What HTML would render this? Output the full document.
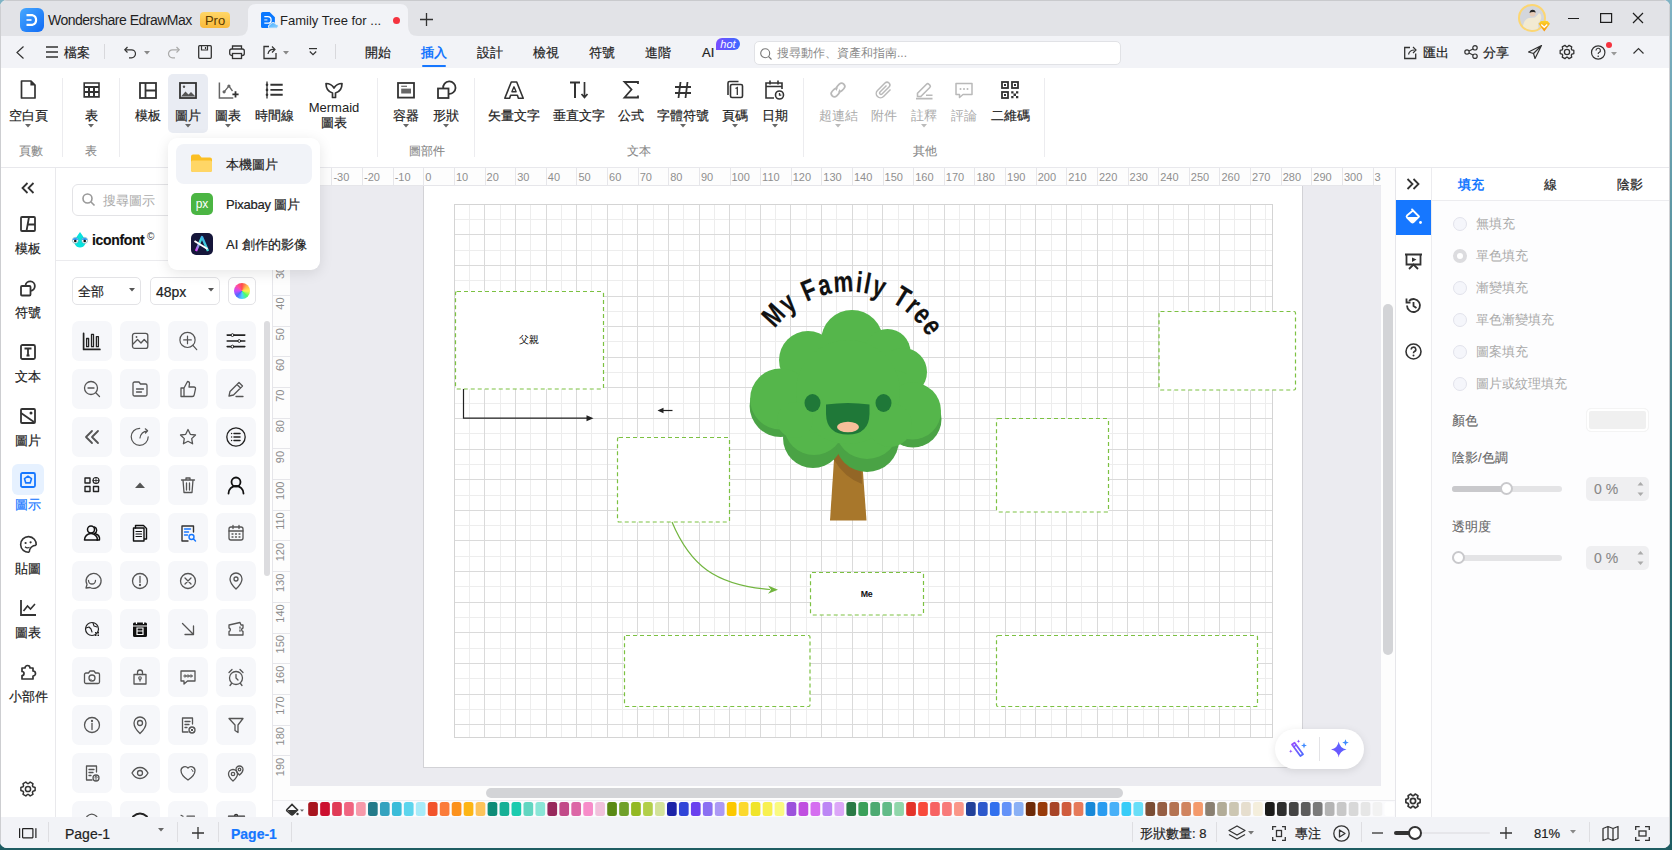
<!DOCTYPE html><html><head><meta charset="utf-8"><style>
html,body{margin:0;padding:0;} #win div.dk{-webkit-text-stroke-width:0.2px;} #win div.md{-webkit-text-stroke-width:0.1px;}
body{width:1672px;height:850px;overflow:hidden;position:relative;font-family:"Liberation Sans", sans-serif;background:linear-gradient(#7fb3c4,#2e7076 60%,#1f5d63);}
#win{position:absolute;left:0;top:0;width:1670px;height:848px;border-radius:7px;overflow:hidden;background:#fff;}
</style></head><body><div id="win">
<div style="position:absolute;left:0px;top:0px;width:1670px;height:36px;background:#e2e3e7;"></div>
<div style="position:absolute;left:0px;top:0px;width:1670px;height:1px;background:#c9cacd;"></div>
<svg style="position:absolute;left:20px;top:8px;overflow:visible;" width="24" height="24" viewBox="0 0 24 24" fill="none"><defs><linearGradient id="lg" x1="0" y1="0" x2="1" y2="1"><stop offset="0" stop-color="#46a8ff"/><stop offset="1" stop-color="#0f6af5"/></linearGradient></defs><rect width="24" height="24" rx="6" fill="url(#lg)"/><path d="M6.5 7.2h6a5 5 0 0 1 0 9.6h-6" stroke="#fff" stroke-width="2.2" fill="none"/><path d="M6.5 12h5" stroke="#cfe3ff" stroke-width="2"/></svg>
<div class="lt" style="position:absolute;left:48px;top:11px;font-size:14px;line-height:18px;color:#1f1f1f;white-space:nowrap;text-align:left;letter-spacing:-0.5px;">Wondershare EdrawMax</div>
<div style="position:absolute;left:200px;top:12px;width:30px;height:16px;background:linear-gradient(#ffd767,#f9b93a);border-radius:4px;"></div>
<div class="lt" style="position:absolute;left:200px;top:12px;width:30px;font-size:13px;line-height:17px;color:#5a3a00;white-space:nowrap;text-align:center;">Pro</div>
<svg style="position:absolute;left:238px;top:4px" width="180" height="32" viewBox="0 0 180 32"><path d="M0 32 Q10 32 10 22 V8 Q10 0 18 0 H162 Q170 0 170 8 V22 Q170 32 180 32 Z" fill="#f2f3f7"/></svg>
<svg style="position:absolute;left:260px;top:11px;overflow:visible;" width="19" height="19" viewBox="0 0 19 19" fill="none"><defs><linearGradient id="cl" x1="0" y1="0" x2="1" y2="1"><stop offset="0" stop-color="#4ab0ff"/><stop offset="1" stop-color="#8fd0ff"/></linearGradient></defs><path d="M1 2.5A1.6 1.6 0 0 1 2.6 1H9.6L14.9 6.2V15.4A1.6 1.6 0 0 1 13.3 17H2.6A1.6 1.6 0 0 1 1 15.4z" fill="#0a78ff"/><path d="M4.3 5.6H7.8A3.3 3.3 0 0 1 7.8 12.2H4.3" stroke="#fff" stroke-width="1.3"/><path d="M4.3 8.9H7.4" stroke="#bcd8ff" stroke-width="1.3"/><path d="M9.2 17.2A2 2 0 0 1 10.2 13.6A3 3 0 0 1 15.8 13.3A2 2 0 0 1 16.8 17.2z" fill="url(#cl)" stroke="#f2f3f7" stroke-width="1"/></svg>
<div class="lt" style="position:absolute;left:280px;top:12px;font-size:13px;line-height:17px;color:#1f1f1f;white-space:nowrap;text-align:left;">Family Tree for ...</div>
<div style="position:absolute;left:393px;top:17px;width:7px;height:7px;border-radius:50%;background:#f5333f"></div>
<svg style="position:absolute;left:420px;top:13px;overflow:visible;" width="13" height="13" viewBox="0 0 13 13" fill="none"><path d="M6.5 0v13M0 6.5h13" stroke="#333" stroke-width="1.3"/></svg>
<svg style="position:absolute;left:1518px;top:4px;overflow:visible;" width="32" height="30" viewBox="0 0 32 30" fill="none"><defs><clipPath id="av"><circle cx="14" cy="14" r="12"/></clipPath><linearGradient id="bdg" x1="0" y1="0" x2="0" y2="1"><stop offset="0" stop-color="#fcd22c"/><stop offset="1" stop-color="#f7940a"/></linearGradient></defs><circle cx="14" cy="14" r="13" fill="#d3d6dc" stroke="#fcd672" stroke-width="2"/><g clip-path="url(#av)"><path d="M4 30 Q4.5 15 11 14 L17 13.5 Q20 11 21 9 Q24 10 23 15 Q22 18 20 19 L21 30z" fill="#f2ead2"/><circle cx="14.5" cy="9.5" r="3" fill="#e8cdb8"/><path d="M11.5 9 Q12 5.5 15 5.8 Q17.5 6 17.8 8.5 Q16 7.5 13 8.2z" fill="#2a2a2a"/></g><path d="M20.5 19.8 L23 17 H29.5 L32 19.8 L26.25 27.4z" fill="url(#bdg)"/><path d="M23.3 20.6 L26.25 23.3 L29.2 20.6" stroke="#fff" stroke-width="1.3" fill="none"/></svg>
<div style="position:absolute;left:1568px;top:18px;width:11px;height:1px;background:#1e1e1e;"></div>
<svg style="position:absolute;left:1600px;top:13px;overflow:visible;" width="12" height="10" viewBox="0 0 12 10" fill="none"><rect x="0.6" y="0.6" width="11" height="8.8" stroke="#1e1e1e" stroke-width="1.2"/></svg>
<svg style="position:absolute;left:1633px;top:13px;overflow:visible;" width="10" height="10" viewBox="0 0 10 10" fill="none"><path d="M0 0l10 10M10 0L0 10" stroke="#1e1e1e" stroke-width="1.2"/></svg>
<div style="position:absolute;left:0px;top:36px;width:1670px;height:32px;background:#f2f3f7;"></div>
<svg style="position:absolute;left:16px;top:46px;overflow:visible;" width="8" height="13" viewBox="0 0 8 13" fill="none"><path d="M7.5 0.5L1 6.5l6.5 6" stroke="#333" stroke-width="1.2"/></svg>
<svg style="position:absolute;left:46px;top:46px;overflow:visible;" width="12" height="12" viewBox="0 0 12 12" fill="none"><path d="M0 1h12M0 6h12M0 11h12" stroke="#333" stroke-width="1.3"/></svg>
<div class="dk" style="position:absolute;left:64px;top:44px;font-size:13px;line-height:17px;color:#222;white-space:nowrap;text-align:left;">檔案</div>
<div style="position:absolute;left:104px;top:44px;width:1px;height:15px;background:#d8d8dc;"></div>
<svg style="position:absolute;left:124px;top:46px;overflow:visible;" width="13" height="12" viewBox="0 0 13 12" fill="none"><path d="M3.5 1L0.8 3.8 3.5 6.5" stroke="#333" stroke-width="1.2"/><path d="M1 3.8h6.5a4 4 0 0 1 0 8H5" stroke="#333" stroke-width="1.2"/></svg>
<svg style="position:absolute;left:144px;top:51px;overflow:visible;" width="6" height="4" viewBox="0 0 6 4" fill="none"><path d="M0 0h6L3 3.5z" fill="#888"/></svg>
<svg style="position:absolute;left:167px;top:46px;overflow:visible;" width="13" height="12" viewBox="0 0 13 12" fill="none"><path d="M9.5 1l2.7 2.8-2.7 2.7" stroke="#aaa" stroke-width="1.2"/><path d="M12 3.8H5.5a4 4 0 0 0 0 8H8" stroke="#aaa" stroke-width="1.2"/></svg>
<svg style="position:absolute;left:198px;top:45px;overflow:visible;" width="14" height="14" viewBox="0 0 14 14" fill="none"><rect x="0.7" y="0.7" width="12.6" height="12.6" rx="1" stroke="#333" stroke-width="1.3"/><path d="M3.5 1v4h6V1M7.5 2v2" stroke="#333" stroke-width="1.2"/></svg>
<svg style="position:absolute;left:229px;top:45px;overflow:visible;" width="16" height="14" viewBox="0 0 16 14" fill="none"><path d="M3.5 4V1h9v3" stroke="#333" stroke-width="1.3"/><rect x="0.7" y="4" width="14.6" height="6.5" rx="2" stroke="#333" stroke-width="1.3"/><rect x="3.5" y="8.5" width="9" height="5" fill="#f2f3f7" stroke="#333" stroke-width="1.3"/></svg>
<svg style="position:absolute;left:263px;top:45px;overflow:visible;" width="14" height="14" viewBox="0 0 14 14" fill="none"><path d="M6 1.5H1v12h12V8" stroke="#333" stroke-width="1.3"/><path d="M5 9 Q6 4 11 4.5" stroke="#333" stroke-width="1.2"/><path d="M9 1.5l3 3-3 3" stroke="#333" stroke-width="1.2"/></svg>
<svg style="position:absolute;left:283px;top:51px;overflow:visible;" width="6" height="4" viewBox="0 0 6 4" fill="none"><path d="M0 0h6L3 3.5z" fill="#888"/></svg>
<svg style="position:absolute;left:309px;top:48px;overflow:visible;" width="8" height="9" viewBox="0 0 8 9" fill="none"><path d="M0 0.6h8" stroke="#333" stroke-width="1.2"/><path d="M0.8 3.5l3.2 3.2 3.2-3.2" stroke="#333" stroke-width="1.2"/></svg>
<div style="position:absolute;left:335px;top:44px;width:1px;height:15px;background:#d8d8dc;"></div>
<div class="dk" style="position:absolute;left:278px;top:44px;width:200px;font-size:13px;line-height:17px;color:#222;white-space:nowrap;text-align:center;">開始</div>
<div class="dk" style="position:absolute;left:334px;top:44px;width:200px;font-size:13px;line-height:17px;color:#1677ff;white-space:nowrap;text-align:center;font-weight:600;-webkit-text-stroke-width:0;">插入</div>
<div class="dk" style="position:absolute;left:390px;top:44px;width:200px;font-size:13px;line-height:17px;color:#222;white-space:nowrap;text-align:center;">設計</div>
<div class="dk" style="position:absolute;left:446px;top:44px;width:200px;font-size:13px;line-height:17px;color:#222;white-space:nowrap;text-align:center;">檢視</div>
<div class="dk" style="position:absolute;left:502px;top:44px;width:200px;font-size:13px;line-height:17px;color:#222;white-space:nowrap;text-align:center;">符號</div>
<div class="dk" style="position:absolute;left:558px;top:44px;width:200px;font-size:13px;line-height:17px;color:#222;white-space:nowrap;text-align:center;">進階</div>
<div style="position:absolute;left:422px;top:65px;width:24px;height:2px;background:#1677ff;border-radius:1px;"></div>
<div class="dk" style="position:absolute;left:702px;top:44px;font-size:13px;line-height:17px;color:#222;white-space:nowrap;text-align:left;">AI</div>
<div style="position:absolute;left:716px;top:38px;width:24px;height:12px;background:linear-gradient(90deg,#7a4dff,#3a6bff);border-radius:6px 6px 6px 0;"></div>
<div class="lt" style="position:absolute;left:716px;top:38px;width:24px;font-size:11px;line-height:15px;color:#fff;white-space:nowrap;text-align:center;line-height:13px;font-style:italic;">hot</div>
<div style="position:absolute;left:754px;top:41px;width:367px;height:24px;background:#fff;border:1px solid #e1e2e6;border-radius:5px;box-sizing:border-box;"></div>
<svg style="position:absolute;left:760px;top:48px;overflow:visible;" width="12" height="12" viewBox="0 0 12 12" fill="none"><circle cx="5.2" cy="5.2" r="4.5" stroke="#777" stroke-width="1.1"/><path d="M8.5 8.5L11.5 11.5" stroke="#777" stroke-width="1.1"/></svg>
<div class="" style="position:absolute;left:777px;top:45px;font-size:12px;line-height:16px;color:#8a8a8a;white-space:nowrap;text-align:left;">搜尋動作、資產和指南...</div>
<svg style="position:absolute;left:1404px;top:46px;overflow:visible;" width="14" height="13" viewBox="0 0 14 13" fill="none"><path d="M6 1.5H0.7v11h11V7.5" stroke="#333" stroke-width="1.3"/><path d="M4.5 8.5 Q5.5 4 10.5 4" stroke="#333" stroke-width="1.2"/><path d="M9 1l3 3-3 3" stroke="#333" stroke-width="1.2"/></svg>
<div class="dk" style="position:absolute;left:1423px;top:44px;font-size:13px;line-height:17px;color:#222;white-space:nowrap;text-align:left;">匯出</div>
<svg style="position:absolute;left:1464px;top:45px;overflow:visible;" width="14" height="14" viewBox="0 0 14 14" fill="none"><circle cx="3" cy="7" r="2.2" stroke="#333" stroke-width="1.2"/><circle cx="11" cy="2.8" r="2.2" stroke="#333" stroke-width="1.2"/><circle cx="11" cy="11.2" r="2.2" stroke="#333" stroke-width="1.2"/><path d="M5 6l4-2M5 8l4 2" stroke="#333" stroke-width="1.2"/></svg>
<div class="dk" style="position:absolute;left:1483px;top:44px;font-size:13px;line-height:17px;color:#222;white-space:nowrap;text-align:left;">分享</div>
<svg style="position:absolute;left:1528px;top:45px;overflow:visible;" width="14" height="14" viewBox="0 0 14 14" fill="none"><path d="M13.5 0.5L0.5 7l5 1.5 1.5 5z M5.5 8.5L13.5 0.5" stroke="#333" stroke-width="1.2" stroke-linejoin="round"/></svg>
<svg style="position:absolute;left:1559px;top:44px;overflow:visible;" width="16" height="16" viewBox="0 0 16 16" fill="none"><path d="M14.83 6.47 L14.83 9.53 L12.84 10.16 L12.29 11.12 L12.74 13.15 L10.09 14.68 L8.55 13.27 L7.45 13.27 L5.91 14.68 L3.26 13.15 L3.71 11.12 L3.16 10.16 L1.17 9.53 L1.17 6.47 L3.16 5.84 L3.71 4.88 L3.26 2.85 L5.91 1.32 L7.45 2.73 L8.55 2.73 L10.09 1.32 L12.74 2.85 L12.29 4.88 L12.84 5.84z" stroke="#333" stroke-width="1.3" stroke-linejoin="round"/><circle cx="8" cy="8" r="2.6" stroke="#333" stroke-width="1.3"/></svg>
<svg style="position:absolute;left:1591px;top:45px;overflow:visible;" width="15" height="15" viewBox="0 0 15 15" fill="none"><circle cx="7.2" cy="7.5" r="6.7" stroke="#333" stroke-width="1.2"/><path d="M5 5.5a2.2 2.2 0 1 1 3 2c-.7.3-.8.8-.8 1.6" stroke="#333" stroke-width="1.2"/><circle cx="7.2" cy="11.2" r=".8" fill="#333"/></svg>
<div style="position:absolute;left:1606px;top:42px;width:6px;height:6px;border-radius:50%;background:#f5333f"></div>
<svg style="position:absolute;left:1611px;top:52px;overflow:visible;" width="6" height="4" viewBox="0 0 6 4" fill="none"><path d="M0 0h6L3 3.5z" fill="#999"/></svg>
<svg style="position:absolute;left:1633px;top:47px;overflow:visible;" width="11" height="7" viewBox="0 0 11 7" fill="none"><path d="M0.5 6.5l5-5 5 5" stroke="#333" stroke-width="1.2"/></svg>
<div style="position:absolute;left:0px;top:68px;width:1670px;height:100px;background:#fff;"></div>
<div style="position:absolute;left:0px;top:167px;width:1670px;height:1px;background:#e8e8ec;"></div>
<div style="position:absolute;left:62px;top:78px;width:1px;height:79px;background:#ececef;"></div>
<div style="position:absolute;left:119px;top:78px;width:1px;height:79px;background:#ececef;"></div>
<div style="position:absolute;left:377px;top:78px;width:1px;height:79px;background:#ececef;"></div>
<div style="position:absolute;left:474px;top:78px;width:1px;height:79px;background:#ececef;"></div>
<div style="position:absolute;left:803px;top:78px;width:1px;height:79px;background:#ececef;"></div>
<div style="position:absolute;left:1044px;top:78px;width:1px;height:79px;background:#ececef;"></div>
<div style="position:absolute;left:168px;top:74px;width:40px;height:59px;background:#e9ecf3;border-radius:5px;"></div>
<svg style="position:absolute;left:19.5px;top:80px;overflow:visible;" width="17" height="19" viewBox="0 0 17 19" fill="none"><path d="M1.5 1h9.5l4 4v13h-13.5z" stroke="#333" stroke-width="1.7" stroke-linejoin="round"/><path d="M11 1v4h4" fill="#333" stroke="#333" stroke-width="1.2"/></svg>
<div class="dk" style="position:absolute;left:-72px;top:107px;width:200px;font-size:13px;line-height:17px;color:#222;white-space:nowrap;text-align:center;">空白頁</div>
<svg style="position:absolute;left:25px;top:124px;overflow:visible;" width="6" height="4" viewBox="0 0 6 4" fill="none"><path d="M0 0h6L3 3.5z" fill="#666"/></svg>
<svg style="position:absolute;left:82.0px;top:81px;overflow:visible;" width="18" height="17" viewBox="0 0 18 17" fill="none"><path fill-rule="evenodd" fill="#333" d="M1.4 1.2h16.4v15.5H1.4z M3 2.8h13.2v2.2H3z M3 7h3v3H3z M8 7h3v3H8z M13 7h3.2v3H13z M3 12h3v3H3z M8 12h3v3H8z M13 12h3.2v3H13z"/></svg>
<div class="dk" style="position:absolute;left:-9px;top:107px;width:200px;font-size:13px;line-height:17px;color:#222;white-space:nowrap;text-align:center;">表</div>
<svg style="position:absolute;left:88px;top:124px;overflow:visible;" width="6" height="4" viewBox="0 0 6 4" fill="none"><path d="M0 0h6L3 3.5z" fill="#666"/></svg>
<svg style="position:absolute;left:139.0px;top:82px;overflow:visible;" width="18" height="17" viewBox="0 0 18 17" fill="none"><rect x="1" y="1" width="16" height="15" stroke="#333" stroke-width="1.8"/><path d="M6.5 1v15M6.5 8.5h10.5" stroke="#333" stroke-width="1.8"/></svg>
<div class="dk" style="position:absolute;left:48px;top:107px;width:200px;font-size:13px;line-height:17px;color:#222;white-space:nowrap;text-align:center;">模板</div>
<svg style="position:absolute;left:179.0px;top:82px;overflow:visible;" width="18" height="17" viewBox="0 0 18 17" fill="none"><rect x="1" y="1" width="16" height="15" stroke="#333" stroke-width="1.8"/><path d="M2 14.5l4.5-5 3 3 2.5-2.5 4.5 4.5z" fill="#555"/><circle cx="5" cy="4.8" r="1.2" fill="#555"/></svg>
<div class="dk" style="position:absolute;left:88px;top:107px;width:200px;font-size:13px;line-height:17px;color:#222;white-space:nowrap;text-align:center;">圖片</div>
<svg style="position:absolute;left:185px;top:124px;overflow:visible;" width="6" height="4" viewBox="0 0 6 4" fill="none"><path d="M0 0h6L3 3.5z" fill="#666"/></svg>
<svg style="position:absolute;left:217.5px;top:81px;overflow:visible;" width="21" height="19" viewBox="0 0 21 19" fill="none"><path d="M1.4 1.6V17H15.3" stroke="#666" stroke-width="1.5"/><path d="M6.1 10.8L10.9 5L14.5 10" stroke="#666" stroke-width="1.3"/><circle cx="6.1" cy="10.8" r="1.6" fill="#666"/><circle cx="10.9" cy="5" r="1.6" fill="#666"/><path d="M17.5 10.3V16.5M14.4 13.4H20.6" stroke="#333" stroke-width="1.8"/></svg>
<div class="dk" style="position:absolute;left:128px;top:107px;width:200px;font-size:13px;line-height:17px;color:#222;white-space:nowrap;text-align:center;">圖表</div>
<svg style="position:absolute;left:225px;top:124px;overflow:visible;" width="6" height="4" viewBox="0 0 6 4" fill="none"><path d="M0 0h6L3 3.5z" fill="#666"/></svg>
<svg style="position:absolute;left:265.0px;top:81px;overflow:visible;" width="18" height="19" viewBox="0 0 18 19" fill="none"><path d="M2 0.5V17.5" stroke="#333" stroke-width="1.3"/><circle cx="2" cy="3.8" r="1.3" fill="#333"/><circle cx="2" cy="8.9" r="1.3" fill="#333"/><circle cx="2" cy="13.8" r="1.3" fill="#333"/><path d="M5.4 3.8H17.7M5.4 8.9H17.7M5.4 13.8H17.7" stroke="#333" stroke-width="1.9"/></svg>
<div class="dk" style="position:absolute;left:174px;top:107px;width:200px;font-size:13px;line-height:17px;color:#222;white-space:nowrap;text-align:center;">時間線</div>
<svg style="position:absolute;left:325.0px;top:82px;overflow:visible;" width="18" height="17" viewBox="0 0 18 17" fill="none"><path d="M1 1.5C1 7 4 10 7.5 11V15.5H10.5V11C14 10 17 7 17 1.5C13 1.5 10.5 3.5 9 6C7.5 3.5 5 1.5 1 1.5z" stroke="#333" stroke-width="1.7" stroke-linejoin="round"/></svg>
<div class="lt" style="position:absolute;left:234px;top:99px;width:200px;font-size:13px;line-height:17px;color:#222;white-space:nowrap;text-align:center;">Mermaid</div>
<div class="dk" style="position:absolute;left:234px;top:114px;width:200px;font-size:13px;line-height:17px;color:#222;white-space:nowrap;text-align:center;">圖表</div>
<svg style="position:absolute;left:397.0px;top:82px;overflow:visible;" width="18" height="17" viewBox="0 0 18 17" fill="none"><rect x="1" y="1" width="16" height="14.6" stroke="#333" stroke-width="1.8"/><path d="M4.2 4.3H10" stroke="#666" stroke-width="1.2"/><rect x="4.2" y="6.6" width="9.8" height="4.9" fill="#666"/></svg>
<div class="dk" style="position:absolute;left:306px;top:107px;width:200px;font-size:13px;line-height:17px;color:#222;white-space:nowrap;text-align:center;">容器</div>
<svg style="position:absolute;left:403px;top:124px;overflow:visible;" width="6" height="4" viewBox="0 0 6 4" fill="none"><path d="M0 0h6L3 3.5z" fill="#666"/></svg>
<svg style="position:absolute;left:437.0px;top:81px;overflow:visible;" width="18" height="18" viewBox="0 0 18 18" fill="none"><rect x="1" y="7.5" width="10.5" height="9.5" stroke="#333" stroke-width="1.8"/><path d="M6.2 7.5A6.2 6.2 0 1 1 11.5 12.8" stroke="#333" stroke-width="1.8"/></svg>
<div class="dk" style="position:absolute;left:346px;top:107px;width:200px;font-size:13px;line-height:17px;color:#222;white-space:nowrap;text-align:center;">形狀</div>
<svg style="position:absolute;left:443px;top:124px;overflow:visible;" width="6" height="4" viewBox="0 0 6 4" fill="none"><path d="M0 0h6L3 3.5z" fill="#666"/></svg>
<div class="md" style="position:absolute;left:-69px;top:143px;width:200px;font-size:12px;line-height:16px;color:#888;white-space:nowrap;text-align:center;">頁數</div>
<div class="md" style="position:absolute;left:-9px;top:143px;width:200px;font-size:12px;line-height:16px;color:#888;white-space:nowrap;text-align:center;">表</div>
<div class="md" style="position:absolute;left:327px;top:143px;width:200px;font-size:12px;line-height:16px;color:#888;white-space:nowrap;text-align:center;">圖部件</div>
<svg style="position:absolute;left:504.0px;top:81px;overflow:visible;" width="20" height="18" viewBox="0 0 20 18" fill="none"><path d="M7.3 1H12.7L19.2 17.2H14.4L13.4 14.2H6.6L5.6 17.2H0.8Z" stroke="#333" stroke-width="1.6" stroke-linejoin="round"/><path d="M10 5.8L12.1 10.8H7.9Z" stroke="#333" stroke-width="1.4" stroke-linejoin="round"/></svg>
<div class="dk" style="position:absolute;left:414px;top:107px;width:200px;font-size:13px;line-height:17px;color:#222;white-space:nowrap;text-align:center;">矢量文字</div>
<svg style="position:absolute;left:569.0px;top:81px;overflow:visible;" width="20" height="18" viewBox="0 0 20 18" fill="none"><path d="M1 1.5h10M6 1.5V17" stroke="#333" stroke-width="2"/><path d="M15.5 1v15M12.5 13l3 3.5 3-3.5" stroke="#333" stroke-width="1.7"/></svg>
<div class="dk" style="position:absolute;left:479px;top:107px;width:200px;font-size:13px;line-height:17px;color:#222;white-space:nowrap;text-align:center;">垂直文字</div>
<svg style="position:absolute;left:623.0px;top:81px;overflow:visible;" width="16" height="18" viewBox="0 0 16 18" fill="none"><path d="M15 3V1H1.5l7 7.5-7 8H15v-2" stroke="#333" stroke-width="1.8" stroke-linejoin="miter"/></svg>
<div class="dk" style="position:absolute;left:531px;top:107px;width:200px;font-size:13px;line-height:17px;color:#222;white-space:nowrap;text-align:center;">公式</div>
<svg style="position:absolute;left:674.0px;top:81px;overflow:visible;" width="18" height="18" viewBox="0 0 18 18" fill="none"><path d="M6.5 1L4.5 17M13.5 1l-2 16M1 6h16M1 12h16" stroke="#333" stroke-width="1.8"/></svg>
<div class="dk" style="position:absolute;left:583px;top:107px;width:200px;font-size:13px;line-height:17px;color:#222;white-space:nowrap;text-align:center;">字體符號</div>
<svg style="position:absolute;left:680px;top:124px;overflow:visible;" width="6" height="4" viewBox="0 0 6 4" fill="none"><path d="M0 0h6L3 3.5z" fill="#666"/></svg>
<svg style="position:absolute;left:726.0px;top:80px;overflow:visible;" width="18" height="19" viewBox="0 0 18 19" fill="none"><rect x="4.5" y="4.5" width="12" height="13" rx="1.5" stroke="#333" stroke-width="1.6"/><path d="M2 15V3a1.5 1.5 0 0 1 1.5-1.5h9" stroke="#333" stroke-width="1.6"/><path d="M9.5 8.5l1.8-1v7.5" stroke="#333" stroke-width="1.3"/></svg>
<div class="dk" style="position:absolute;left:635px;top:107px;width:200px;font-size:13px;line-height:17px;color:#222;white-space:nowrap;text-align:center;">頁碼</div>
<svg style="position:absolute;left:732px;top:124px;overflow:visible;" width="6" height="4" viewBox="0 0 6 4" fill="none"><path d="M0 0h6L3 3.5z" fill="#666"/></svg>
<svg style="position:absolute;left:765.0px;top:80px;overflow:visible;" width="20" height="20" viewBox="0 0 20 20" fill="none"><path d="M17 9V3H1v15h8" stroke="#333" stroke-width="1.6"/><path d="M1 6.5h16M5 0.5v4M13 0.5v4" stroke="#333" stroke-width="1.6"/><circle cx="14.5" cy="15" r="4" fill="#fff" stroke="#333" stroke-width="1.6"/><path d="M14.5 13v2.2h1.8" stroke="#333" stroke-width="1.3"/></svg>
<div class="dk" style="position:absolute;left:675px;top:107px;width:200px;font-size:13px;line-height:17px;color:#222;white-space:nowrap;text-align:center;">日期</div>
<svg style="position:absolute;left:772px;top:124px;overflow:visible;" width="6" height="4" viewBox="0 0 6 4" fill="none"><path d="M0 0h6L3 3.5z" fill="#666"/></svg>
<div class="md" style="position:absolute;left:539px;top:143px;width:200px;font-size:12px;line-height:16px;color:#888;white-space:nowrap;text-align:center;">文本</div>
<svg style="position:absolute;left:829.0px;top:81px;overflow:visible;" width="18" height="18" viewBox="0 0 18 18" fill="none"><g transform="rotate(-45 9 9)"><rect x="0.8" y="5.8" width="9" height="6.4" rx="3.2" stroke="#b9b9b9" stroke-width="1.7"/><rect x="8.2" y="5.8" width="9" height="6.4" rx="3.2" stroke="#b9b9b9" stroke-width="1.7"/></g><path d="M10.2 6.3L7.8 11.7" stroke="#fff" stroke-width="2"/></svg>
<div class="" style="position:absolute;left:738px;top:107px;width:200px;font-size:13px;line-height:17px;color:#aaa;white-space:nowrap;text-align:center;">超連結</div>
<svg style="position:absolute;left:835px;top:124px;overflow:visible;" width="6" height="4" viewBox="0 0 6 4" fill="none"><path d="M0 0h6L3 3.5z" fill="#bbb"/></svg>
<svg style="position:absolute;left:875.0px;top:81px;overflow:visible;" width="18" height="18" viewBox="0 0 18 18" fill="none"><path d="M15.5 8.5l-7 7a4 4 0 0 1-6-6l7.5-7.5a2.7 2.7 0 0 1 4 4L7 13a1.3 1.3 0 0 1-2-2l6.5-6.5" stroke="#b9b9b9" stroke-width="1.5"/></svg>
<div class="" style="position:absolute;left:784px;top:107px;width:200px;font-size:13px;line-height:17px;color:#aaa;white-space:nowrap;text-align:center;">附件</div>
<svg style="position:absolute;left:915.0px;top:80px;overflow:visible;" width="18" height="19" viewBox="0 0 18 19" fill="none"><path d="M2.5 13.2L11.5 4.2a1.7 1.7 0 0 1 2.4 0l.9.9a1.7 1.7 0 0 1 0 2.4L5.8 16.5H2.5z" stroke="#b9b9b9" stroke-width="1.6" stroke-linejoin="round"/><path d="M11 15.2h6.5M1 18.6h16.5" stroke="#b9b9b9" stroke-width="1.6"/></svg>
<div class="" style="position:absolute;left:824px;top:107px;width:200px;font-size:13px;line-height:17px;color:#aaa;white-space:nowrap;text-align:center;">註釋</div>
<svg style="position:absolute;left:921px;top:124px;overflow:visible;" width="6" height="4" viewBox="0 0 6 4" fill="none"><path d="M0 0h6L3 3.5z" fill="#bbb"/></svg>
<svg style="position:absolute;left:955.0px;top:82px;overflow:visible;" width="18" height="17" viewBox="0 0 18 17" fill="none"><path d="M1 1.5h16v11H8l-3.5 3v-3H1z" stroke="#b9b9b9" stroke-width="1.5" stroke-linejoin="round"/><circle cx="5.5" cy="7" r="1" fill="#b9b9b9"/><circle cx="9" cy="7" r="1" fill="#b9b9b9"/><circle cx="12.5" cy="7" r="1" fill="#b9b9b9"/></svg>
<div class="" style="position:absolute;left:864px;top:107px;width:200px;font-size:13px;line-height:17px;color:#aaa;white-space:nowrap;text-align:center;">評論</div>
<svg style="position:absolute;left:1001.0px;top:81px;overflow:visible;" width="18" height="18" viewBox="0 0 18 18" fill="none"><rect x="1" y="1" width="6" height="6" stroke="#333" stroke-width="1.8"/><rect x="11" y="1" width="6" height="6" stroke="#333" stroke-width="1.8"/><rect x="1" y="11" width="6" height="6" stroke="#333" stroke-width="1.8"/><path d="M3 3h2v2H3zM13 3h2v2h-2zM3 13h2v2H3zM10.2 10.2h2.3v2.3h-2.3zM15 10.2h2.3v2.3H15zM12.5 12.5h2.5v2.5h-2.5zM10.2 15h2.3v2.3h-2.3zM15 15h2.3v2.3H15z" fill="#333"/></svg>
<div class="dk" style="position:absolute;left:910px;top:107px;width:200px;font-size:13px;line-height:17px;color:#222;white-space:nowrap;text-align:center;">二維碼</div>
<div class="md" style="position:absolute;left:825px;top:143px;width:200px;font-size:12px;line-height:16px;color:#888;white-space:nowrap;text-align:center;">其他</div>
<div style="position:absolute;left:0px;top:168px;width:55px;height:649px;background:#fff;"></div>
<div style="position:absolute;left:55px;top:168px;width:1px;height:649px;background:#e9e9ec;"></div>
<svg style="position:absolute;left:21px;top:182px;overflow:visible;" width="14" height="12" viewBox="0 0 14 12" fill="none"><path d="M6.5 1L1.5 6l5 5M12.5 1l-5 5 5 5" stroke="#333" stroke-width="1.8"/></svg>
<svg style="position:absolute;left:20.0px;top:216px;overflow:visible;" width="16" height="16" viewBox="0 0 16 16" fill="none"><rect x="1" y="1" width="14" height="14" rx="1" stroke="#333" stroke-width="1.8"/><path d="M9 1L6.5 15M8 8.5h7" stroke="#333" stroke-width="1.8"/></svg>
<div class="dk" style="position:absolute;left:-72px;top:240px;width:200px;font-size:13px;line-height:17px;color:#222;white-space:nowrap;text-align:center;">模板</div>
<svg style="position:absolute;left:20.0px;top:280px;overflow:visible;" width="16" height="16" viewBox="0 0 16 16" fill="none"><rect x="1" y="6" width="9.5" height="9.5" rx="1" stroke="#333" stroke-width="1.8"/><path d="M5.5 6V5.5A4.7 4.7 0 1 1 10.5 10.8" stroke="#333" stroke-width="1.8"/></svg>
<div class="dk" style="position:absolute;left:-72px;top:304px;width:200px;font-size:13px;line-height:17px;color:#222;white-space:nowrap;text-align:center;">符號</div>
<svg style="position:absolute;left:20.0px;top:344px;overflow:visible;" width="16" height="16" viewBox="0 0 16 16" fill="none"><rect x="1" y="1" width="14" height="14" rx="1.5" stroke="#333" stroke-width="1.8"/><path d="M4.5 4.5h7M8 4.5v7M6.5 11.5h3" stroke="#333" stroke-width="1.8"/></svg>
<div class="dk" style="position:absolute;left:-72px;top:368px;width:200px;font-size:13px;line-height:17px;color:#222;white-space:nowrap;text-align:center;">文本</div>
<svg style="position:absolute;left:20.0px;top:408px;overflow:visible;" width="16" height="16" viewBox="0 0 16 16" fill="none"><rect x="1" y="1" width="14" height="14" rx="1" stroke="#333" stroke-width="1.8"/><path d="M1 5l13 9" stroke="#333" stroke-width="1.8"/><circle cx="11" cy="5" r="1.5" fill="#333"/></svg>
<div class="dk" style="position:absolute;left:-72px;top:432px;width:200px;font-size:13px;line-height:17px;color:#222;white-space:nowrap;text-align:center;">圖片</div>
<div style="position:absolute;left:12px;top:464px;width:32px;height:31px;background:#e6f1ff;border-radius:6px;"></div>
<svg style="position:absolute;left:20.0px;top:472px;overflow:visible;" width="16" height="16" viewBox="0 0 16 16" fill="none"><rect x="1" y="1" width="14" height="14" rx="1.5" stroke="#1677ff" stroke-width="1.8"/><path d="M8 4.2l3.5 2.5-1.3 4.2H5.8L4.5 6.7z" stroke="#1677ff" stroke-width="1.6" stroke-linejoin="round"/></svg>
<div class="dk" style="position:absolute;left:-72px;top:496px;width:200px;font-size:13px;line-height:17px;color:#1677ff;white-space:nowrap;text-align:center;">圖示</div>
<svg style="position:absolute;left:19.5px;top:536px;overflow:visible;" width="17" height="17" viewBox="0 0 17 17" fill="none"><path d="M16.2 9.2A7.8 7.8 0 1 0 9.2 16.2" stroke="#333" stroke-width="1.6"/><path d="M9.2 16.2C9.2 12.2 12.2 9.2 16.2 9.2" stroke="#333" stroke-width="1.6"/><circle cx="5.6" cy="7" r="1.1" fill="#333"/><circle cx="10.6" cy="6.3" r="1.1" fill="#333"/><path d="M5 10.8Q7 12.8 9.5 11.3" stroke="#333" stroke-width="1.3"/></svg>
<div class="dk" style="position:absolute;left:-72px;top:560px;width:200px;font-size:13px;line-height:17px;color:#222;white-space:nowrap;text-align:center;">貼圖</div>
<svg style="position:absolute;left:20.0px;top:600px;overflow:visible;" width="16" height="16" viewBox="0 0 16 16" fill="none"><path d="M1 0v15h15" stroke="#333" stroke-width="1.8"/><path d="M3.5 11l4-5 3 3 4.5-5" stroke="#333" stroke-width="1.6"/></svg>
<div class="dk" style="position:absolute;left:-72px;top:624px;width:200px;font-size:13px;line-height:17px;color:#222;white-space:nowrap;text-align:center;">圖表</div>
<svg style="position:absolute;left:20.0px;top:664px;overflow:visible;" width="16" height="16" viewBox="0 0 16 16" fill="none"><path d="M2 5h3a2.5 2.5 0 1 1 5 0h3v3a2.5 2.5 0 1 1 0 5v3H2v-3.5a2 2 0 1 0 0-4z" stroke="#333" stroke-width="1.7" stroke-linejoin="round" transform="translate(0,-1)"/></svg>
<div class="dk" style="position:absolute;left:-72px;top:688px;width:200px;font-size:13px;line-height:17px;color:#222;white-space:nowrap;text-align:center;">小部件</div>
<svg style="position:absolute;left:20px;top:781px;overflow:visible;" width="16" height="16" viewBox="0 0 16 16" fill="none"><path d="M15.12 6.41 L15.12 9.59 L13.02 10.24 L12.45 11.23 L12.94 13.37 L10.18 14.97 L8.57 13.47 L7.43 13.47 L5.82 14.97 L3.06 13.37 L3.55 11.23 L2.98 10.24 L0.88 9.59 L0.88 6.41 L2.98 5.76 L3.55 4.77 L3.06 2.63 L5.82 1.03 L7.43 2.53 L8.57 2.53 L10.18 1.03 L12.94 2.63 L12.45 4.77 L13.02 5.76z" stroke="#333" stroke-width="1.5" stroke-linejoin="round"/><circle cx="8" cy="8" r="2.6" stroke="#333" stroke-width="1.5"/></svg>
<div style="position:absolute;left:56px;top:168px;width:216px;height:649px;background:#fff;"></div>
<div style="position:absolute;left:72px;top:184px;width:260px;height:32px;background:#fff;border:1px solid #e3e3e6;border-radius:6px;box-sizing:border-box;"></div>
<svg style="position:absolute;left:82px;top:193px;overflow:visible;" width="13" height="13" viewBox="0 0 13 13" fill="none"><circle cx="5.5" cy="5.5" r="4.5" stroke="#999" stroke-width="1.6"/><path d="M9 9l3.5 3.5" stroke="#999" stroke-width="1.6"/></svg>
<div class="" style="position:absolute;left:103px;top:192px;font-size:13px;line-height:17px;color:#aaa;white-space:nowrap;text-align:left;">搜尋圖示</div>
<svg style="position:absolute;left:72px;top:232px;overflow:visible;" width="16" height="16" viewBox="0 0 16 16" fill="none"><path d="M8 0Q10.5 3.5 12.5 6.5Q14.5 9 13.3 12Q11.5 15.6 8 15.6Q4.5 15.6 2.7 12Q1.5 9 3.5 6.5Q5.5 3.5 8 0z" fill="#08e2de"/><circle cx="3.4" cy="8.4" r="3" fill="#fff" stroke="#2a8fa0" stroke-width=".5"/><circle cx="12.6" cy="8.4" r="3" fill="#fff" stroke="#2a8fa0" stroke-width=".5"/><path d="M0.6 8A2.9 2.9 0 0 1 6.2 8z" fill="#3a9cf5"/><path d="M9.8 8A2.9 2.9 0 0 1 15.4 8z" fill="#3a9cf5"/><circle cx="3.3" cy="9" r="1.3" fill="#111"/><circle cx="12.7" cy="9" r="1.3" fill="#111"/></svg>
<div class="dk" style="position:absolute;left:92px;top:231px;font-size:14px;line-height:18px;color:#111;white-space:nowrap;text-align:left;font-weight:bold;letter-spacing:-0.35px;-webkit-text-stroke-width:0.15px;">iconfont</div>
<div class="" style="position:absolute;left:147px;top:230px;font-size:10px;line-height:14px;color:#333;white-space:nowrap;text-align:left;-webkit-text-stroke-width:0;">©</div>
<div style="position:absolute;left:56px;top:260px;width:216px;height:1px;background:#ebebee;"></div>
<div style="position:absolute;left:72px;top:277px;width:69px;height:28px;background:#fff;border:1px solid #e3e3e6;border-radius:5px;box-sizing:border-box;"></div>
<div class="dk" style="position:absolute;left:78px;top:283px;font-size:13px;line-height:17px;color:#222;white-space:nowrap;text-align:left;">全部</div>
<svg style="position:absolute;left:129px;top:288px;overflow:visible;" width="6" height="4" viewBox="0 0 6 4" fill="none"><path d="M0 0h6L3 3.5z" fill="#555"/></svg>
<div style="position:absolute;left:150px;top:277px;width:70px;height:28px;background:#fff;border:1px solid #e3e3e6;border-radius:5px;box-sizing:border-box;"></div>
<div class="dk" style="position:absolute;left:156px;top:283px;font-size:14px;line-height:18px;color:#222;white-space:nowrap;text-align:left;">48px</div>
<svg style="position:absolute;left:208px;top:288px;overflow:visible;" width="6" height="4" viewBox="0 0 6 4" fill="none"><path d="M0 0h6L3 3.5z" fill="#555"/></svg>
<div style="position:absolute;left:228px;top:277px;width:28px;height:28px;background:#fff;border:1px solid #e3e3e6;border-radius:5px;box-sizing:border-box;"></div>
<div style="position:absolute;left:234px;top:283px;width:16px;height:16px;border-radius:50%;background:conic-gradient(#ff4d4d,#ffb84d,#fff04d,#4dff6a,#4dd2ff,#4d6bff,#c44dff,#ff4da6,#ff4d4d);"></div>
<div style="position:absolute;left:264px;top:321px;width:6px;height:255px;background:#dcdcdf;border-radius:3px;"></div>
<div style="position:absolute;left:72px;top:321px;width:40px;height:40px;background:#f6f7fa;border-radius:7px;"></div>
<svg style="position:absolute;left:82px;top:331px;overflow:visible;" width="20" height="20" viewBox="0 0 20 20" fill="none"><path d="M1.6 2.4V18.4H17.9" stroke="#222" stroke-width="1.7" stroke-linecap="round" stroke-linejoin="round"/><path d="M4.6 7.5h2v8.2h-2zM9.5 3.4h2v12.3h-2zM14.4 5.6h2v10.1h-2z" stroke="#222" stroke-width="1.3" stroke-linecap="round" stroke-linejoin="round"/></svg>
<div style="position:absolute;left:120px;top:321px;width:40px;height:40px;background:#f6f7fa;border-radius:7px;"></div>
<svg style="position:absolute;left:130px;top:331px;overflow:visible;" width="20" height="20" viewBox="0 0 20 20" fill="none"><rect x="2.5" y="2.4" width="15.3" height="15" rx="2.2" stroke="#555" stroke-width="1.3" stroke-linecap="round" stroke-linejoin="round"/><path d="M3 13L7.5 8.5 11 12 14.2 8.5 17.5 12" stroke="#555" stroke-width="1.3" stroke-linecap="round" stroke-linejoin="round"/><circle cx="6.5" cy="6" r=".9" fill="#555"/></svg>
<div style="position:absolute;left:168px;top:321px;width:40px;height:40px;background:#f6f7fa;border-radius:7px;"></div>
<svg style="position:absolute;left:178px;top:331px;overflow:visible;" width="20" height="20" viewBox="0 0 20 20" fill="none"><circle cx="9.5" cy="8.9" r="7.6" stroke="#555" stroke-width="1.2" stroke-linecap="round" stroke-linejoin="round"/><path d="M9.5 5.1V12.7M5.7 8.9H13.3M14.9 14.3L18.7 18.7" stroke="#555" stroke-width="1.2" stroke-linecap="round" stroke-linejoin="round"/></svg>
<div style="position:absolute;left:216px;top:321px;width:40px;height:40px;background:#f6f7fa;border-radius:7px;"></div>
<svg style="position:absolute;left:226px;top:331px;overflow:visible;" width="20" height="20" viewBox="0 0 20 20" fill="none"><path d="M1.2 4.1H18.8M1.2 10H18.8M1.2 15.6H18.8" stroke="#222" stroke-width="1.6" stroke-linecap="round" stroke-linejoin="round"/><circle cx="6.5" cy="4.1" r="1.4" fill="#fff" stroke="#222" stroke-width="1" stroke-linecap="round" stroke-linejoin="round"/><circle cx="13.3" cy="10" r="1.4" fill="#fff" stroke="#222" stroke-width="1" stroke-linecap="round" stroke-linejoin="round"/><circle cx="6.5" cy="15.6" r="1.4" fill="#fff" stroke="#222" stroke-width="1" stroke-linecap="round" stroke-linejoin="round"/></svg>
<div style="position:absolute;left:72px;top:369px;width:40px;height:40px;background:#f6f7fa;border-radius:7px;"></div>
<svg style="position:absolute;left:82px;top:379px;overflow:visible;" width="20" height="20" viewBox="0 0 20 20" fill="none"><circle cx="9" cy="9" r="6.5" stroke="#555" stroke-width="1.3" stroke-linecap="round" stroke-linejoin="round"/><path d="M6 9h6M14 14l3.5 3.5" stroke="#555" stroke-width="1.3" stroke-linecap="round" stroke-linejoin="round"/></svg>
<div style="position:absolute;left:120px;top:369px;width:40px;height:40px;background:#f6f7fa;border-radius:7px;"></div>
<svg style="position:absolute;left:130px;top:379px;overflow:visible;" width="20" height="20" viewBox="0 0 20 20" fill="none"><path d="M3 4.5a1.5 1.5 0 0 1 1.5-1.5H9l1.5 2h5a1.5 1.5 0 0 1 1.5 1.5v9a1.5 1.5 0 0 1-1.5 1.5h-11A1.5 1.5 0 0 1 3 15.5z" stroke="#555" stroke-width="1.3" stroke-linecap="round" stroke-linejoin="round"/><path d="M6.5 10h7M6.5 13h5" stroke="#555" stroke-width="1.3" stroke-linecap="round" stroke-linejoin="round"/></svg>
<div style="position:absolute;left:168px;top:369px;width:40px;height:40px;background:#f6f7fa;border-radius:7px;"></div>
<svg style="position:absolute;left:178px;top:379px;overflow:visible;" width="20" height="20" viewBox="0 0 20 20" fill="none"><path d="M3 9h3v8.5H3zM6 9l3.5-6.5c1.5 0 2 1 2 2L11 8h5a1.5 1.5 0 0 1 1.5 1.8l-1.3 6a2 2 0 0 1-2 1.7H6" stroke="#555" stroke-width="1.3" stroke-linecap="round" stroke-linejoin="round"/></svg>
<div style="position:absolute;left:216px;top:369px;width:40px;height:40px;background:#f6f7fa;border-radius:7px;"></div>
<svg style="position:absolute;left:226px;top:379px;overflow:visible;" width="20" height="20" viewBox="0 0 20 20" fill="none"><path d="M3 17l1-4.5L13 3.5l3.5 3.5-9 9z M11 5.5l3.5 3.5M10 17.5h7" stroke="#555" stroke-width="1.3" stroke-linecap="round" stroke-linejoin="round"/></svg>
<div style="position:absolute;left:72px;top:417px;width:40px;height:40px;background:#f6f7fa;border-radius:7px;"></div>
<svg style="position:absolute;left:82px;top:427px;overflow:visible;" width="20" height="20" viewBox="0 0 20 20" fill="none"><path d="M10 4l-6 6 6 6M16 4l-6 6 6 6" stroke="#555" stroke-width="1.8" stroke-linecap="round" stroke-linejoin="round"/></svg>
<div style="position:absolute;left:120px;top:417px;width:40px;height:40px;background:#f6f7fa;border-radius:7px;"></div>
<svg style="position:absolute;left:130px;top:427px;overflow:visible;" width="20" height="20" viewBox="0 0 20 20" fill="none"><path d="M9.7 1.3A8.5 8.5 0 1 0 18.2 9.8" stroke="#555" stroke-width="1.2" stroke-linecap="round" stroke-linejoin="round"/><path d="M10 11Q11 4.5 17.5 3.8M15.3 1.8L17.6 3.8 15.5 6" stroke="#555" stroke-width="1.2" stroke-linecap="round" stroke-linejoin="round"/></svg>
<div style="position:absolute;left:168px;top:417px;width:40px;height:40px;background:#f6f7fa;border-radius:7px;"></div>
<svg style="position:absolute;left:178px;top:427px;overflow:visible;" width="20" height="20" viewBox="0 0 20 20" fill="none"><path d="M10 2.5l2.3 4.8 5.2.7-3.8 3.6.9 5.2L10 14.3l-4.6 2.5.9-5.2L2.5 8l5.2-.7z" stroke="#555" stroke-width="1.3" stroke-linecap="round" stroke-linejoin="round"/></svg>
<div style="position:absolute;left:216px;top:417px;width:40px;height:40px;background:#f6f7fa;border-radius:7px;"></div>
<svg style="position:absolute;left:226px;top:427px;overflow:visible;" width="20" height="20" viewBox="0 0 20 20" fill="none"><circle cx="10" cy="10" r="9.2" stroke="#222" stroke-width="1.3" stroke-linecap="round" stroke-linejoin="round"/><path d="M8 6.5h6M8 10h6M8 13.5h6" stroke="#222" stroke-width="1.5" stroke-linecap="round" stroke-linejoin="round"/><circle cx="5.6" cy="6.5" r=".7" fill="#222"/><circle cx="5.6" cy="10" r=".7" fill="#222"/><circle cx="5.6" cy="13.5" r=".7" fill="#222"/></svg>
<div style="position:absolute;left:72px;top:465px;width:40px;height:40px;background:#f6f7fa;border-radius:7px;"></div>
<svg style="position:absolute;left:82px;top:475px;overflow:visible;" width="20" height="20" viewBox="0 0 20 20" fill="none"><path d="M3 3h5v5H3zM3 11.5h5v5H3zM11.5 11.5h5v5h-5z" stroke="#222" stroke-width="1.4" stroke-linecap="round" stroke-linejoin="round"/><circle cx="14" cy="5.5" r="3" stroke="#222" stroke-width="1.1" stroke-linecap="round" stroke-linejoin="round"/><path d="M11 5.5h6M14 2.5v6" stroke="#222" stroke-width="0.8" stroke-linecap="round" stroke-linejoin="round"/></svg>
<div style="position:absolute;left:120px;top:465px;width:40px;height:40px;background:#f6f7fa;border-radius:7px;"></div>
<svg style="position:absolute;left:130px;top:475px;overflow:visible;" width="20" height="20" viewBox="0 0 20 20" fill="none"><path d="M5 13L10 7.5 15 13z" fill="#555"/></svg>
<div style="position:absolute;left:168px;top:465px;width:40px;height:40px;background:#f6f7fa;border-radius:7px;"></div>
<svg style="position:absolute;left:178px;top:475px;overflow:visible;" width="20" height="20" viewBox="0 0 20 20" fill="none"><path d="M3.5 5h13M8 5V3h4v2M5 5l1 12.5h8L15 5M8.5 8v7M11.5 8v7" stroke="#555" stroke-width="1.3" stroke-linecap="round" stroke-linejoin="round"/></svg>
<div style="position:absolute;left:216px;top:465px;width:40px;height:40px;background:#f6f7fa;border-radius:7px;"></div>
<svg style="position:absolute;left:226px;top:475px;overflow:visible;" width="20" height="20" viewBox="0 0 20 20" fill="none"><circle cx="10" cy="7" r="4.5" stroke="#111" stroke-width="1.8" stroke-linecap="round" stroke-linejoin="round"/><path d="M2.5 18.5a7.5 7.5 0 0 1 15 0" stroke="#111" stroke-width="1.8" stroke-linecap="round" stroke-linejoin="round"/></svg>
<div style="position:absolute;left:72px;top:513px;width:40px;height:40px;background:#f6f7fa;border-radius:7px;"></div>
<svg style="position:absolute;left:82px;top:523px;overflow:visible;" width="20" height="20" viewBox="0 0 20 20" fill="none"><circle cx="9" cy="6.5" r="3.5" stroke="#111" stroke-width="1.5" stroke-linecap="round" stroke-linejoin="round"/><path d="M2.5 17a6.5 6.5 0 0 1 13 0z" stroke="#111" stroke-width="1.5" stroke-linecap="round" stroke-linejoin="round"/><path d="M12.5 4a3.5 3.5 0 0 1 0 6.5M14 11a5.5 5.5 0 0 1 3.5 6H15" stroke="#111" stroke-width="1.4" stroke-linecap="round" stroke-linejoin="round"/></svg>
<div style="position:absolute;left:120px;top:513px;width:40px;height:40px;background:#f6f7fa;border-radius:7px;"></div>
<svg style="position:absolute;left:130px;top:523px;overflow:visible;" width="20" height="20" viewBox="0 0 20 20" fill="none"><path d="M5.5 5V2.5h8l3 3V16h-2" stroke="#111" stroke-width="1.4" stroke-linecap="round" stroke-linejoin="round"/><rect x="3.5" y="5" width="10.5" height="13" stroke="#111" stroke-width="1.4" stroke-linecap="round" stroke-linejoin="round"/><path d="M6 8.5h5.5M6 11h5.5M6 13.5h5.5" stroke="#111" stroke-width="1.2" stroke-linecap="round" stroke-linejoin="round"/></svg>
<div style="position:absolute;left:168px;top:513px;width:40px;height:40px;background:#f6f7fa;border-radius:7px;"></div>
<svg style="position:absolute;left:178px;top:523px;overflow:visible;" width="20" height="20" viewBox="0 0 20 20" fill="none"><path d="M15.5 9V3H4v15h6" stroke="#333" stroke-width="1.4" stroke-linecap="round" stroke-linejoin="round"/><path d="M6.5 6h6M6.5 9h4M6.5 12h3" stroke="#1677ff" stroke-width="1.4" stroke-linecap="round" stroke-linejoin="round"/><circle cx="13.5" cy="14" r="2.5" stroke="#1677ff" stroke-width="1.4" stroke-linecap="round" stroke-linejoin="round"/><path d="M15.5 16l2 2" stroke="#1677ff" stroke-width="1.4" stroke-linecap="round" stroke-linejoin="round"/></svg>
<div style="position:absolute;left:216px;top:513px;width:40px;height:40px;background:#f6f7fa;border-radius:7px;"></div>
<svg style="position:absolute;left:226px;top:523px;overflow:visible;" width="20" height="20" viewBox="0 0 20 20" fill="none"><rect x="3" y="4" width="14" height="13" rx="2" stroke="#555" stroke-width="1.3" stroke-linecap="round" stroke-linejoin="round"/><path d="M3 8h14M7 2.5v3M13 2.5v3M6 11h1M9.5 11h1M13 11h1M6 14h1M9.5 14h1M13 14h1" stroke="#555" stroke-width="1.3" stroke-linecap="round" stroke-linejoin="round"/></svg>
<div style="position:absolute;left:72px;top:561px;width:40px;height:40px;background:#f6f7fa;border-radius:7px;"></div>
<svg style="position:absolute;left:82px;top:571px;overflow:visible;" width="20" height="20" viewBox="0 0 20 20" fill="none"><path d="M4 17l1-3.5A7.5 7.5 0 1 1 8 16.5z" stroke="#555" stroke-width="1.3" stroke-linecap="round" stroke-linejoin="round"/><path d="M6.5 9.5a3.5 3.5 0 0 0 7 0" stroke="#555" stroke-width="1.3" stroke-linecap="round" stroke-linejoin="round"/></svg>
<div style="position:absolute;left:120px;top:561px;width:40px;height:40px;background:#f6f7fa;border-radius:7px;"></div>
<svg style="position:absolute;left:130px;top:571px;overflow:visible;" width="20" height="20" viewBox="0 0 20 20" fill="none"><circle cx="10" cy="10" r="7.5" stroke="#555" stroke-width="1.3" stroke-linecap="round" stroke-linejoin="round"/><path d="M10 5.5v6" stroke="#555" stroke-width="1.3" stroke-linecap="round" stroke-linejoin="round"/><circle cx="10" cy="14" r=".5" fill="#555" stroke="#555" stroke-width="1.3" stroke-linecap="round" stroke-linejoin="round"/></svg>
<div style="position:absolute;left:168px;top:561px;width:40px;height:40px;background:#f6f7fa;border-radius:7px;"></div>
<svg style="position:absolute;left:178px;top:571px;overflow:visible;" width="20" height="20" viewBox="0 0 20 20" fill="none"><circle cx="10" cy="10" r="7.5" stroke="#555" stroke-width="1.3" stroke-linecap="round" stroke-linejoin="round"/><path d="M7 7l6 6M13 7l-6 6" stroke="#555" stroke-width="1.3" stroke-linecap="round" stroke-linejoin="round"/></svg>
<div style="position:absolute;left:216px;top:561px;width:40px;height:40px;background:#f6f7fa;border-radius:7px;"></div>
<svg style="position:absolute;left:226px;top:571px;overflow:visible;" width="20" height="20" viewBox="0 0 20 20" fill="none"><path d="M10 18s-6-5.5-6-10a6 6 0 0 1 12 0c0 4.5-6 10-6 10z" stroke="#555" stroke-width="1.3" stroke-linecap="round" stroke-linejoin="round"/><circle cx="10" cy="8" r="2" stroke="#555" stroke-width="1.3" stroke-linecap="round" stroke-linejoin="round"/></svg>
<div style="position:absolute;left:72px;top:609px;width:40px;height:40px;background:#f6f7fa;border-radius:7px;"></div>
<svg style="position:absolute;left:82px;top:619px;overflow:visible;" width="20" height="20" viewBox="0 0 20 20" fill="none"><circle cx="10" cy="10" r="6.5" stroke="#222" stroke-width="1.2" stroke-linecap="round" stroke-linejoin="round"/><path d="M4 9l3-1 2 2 1 3M11 4l1 3 3 1" stroke="#222" stroke-width="1.1" stroke-linecap="round" stroke-linejoin="round"/><path d="M13 13h1.5v1.5H13zM15.5 15.5H17V17h-1.5zM13 15.5h1.5V17H13zM15.5 13H17v1.5h-1.5z" fill="#222"/></svg>
<div style="position:absolute;left:120px;top:609px;width:40px;height:40px;background:#f6f7fa;border-radius:7px;"></div>
<svg style="position:absolute;left:130px;top:619px;overflow:visible;" width="20" height="20" viewBox="0 0 20 20" fill="none"><path d="M3 5a1.5 1.5 0 0 1 1.5-1.5h11A1.5 1.5 0 0 1 17 5v11.5a1.5 1.5 0 0 1-1.5 1.5h-11A1.5 1.5 0 0 1 3 16.5z" fill="#111"/><path d="M6.5 2v3M13.5 2v3M3 7h14" stroke="#fff" stroke-width="1.2"/><path d="M7 9h6v6.5H7zM7 12h6" stroke="#fff" stroke-width="1.2"/></svg>
<div style="position:absolute;left:168px;top:609px;width:40px;height:40px;background:#f6f7fa;border-radius:7px;"></div>
<svg style="position:absolute;left:178px;top:619px;overflow:visible;" width="20" height="20" viewBox="0 0 20 20" fill="none"><path d="M4.5 4.5l11 11M15.5 7v8.5H7" stroke="#555" stroke-width="1.3" stroke-linecap="round" stroke-linejoin="round"/></svg>
<div style="position:absolute;left:216px;top:609px;width:40px;height:40px;background:#f6f7fa;border-radius:7px;"></div>
<svg style="position:absolute;left:226px;top:619px;overflow:visible;" width="20" height="20" viewBox="0 0 20 20" fill="none"><path d="M3 8.5V6l11-2.5L15 6h2v3a1.8 1.8 0 0 0 0 3.5V16H3v-3.5a1.8 1.8 0 0 0 0-3.5z" stroke="#555" stroke-width="1.3" stroke-linecap="round" stroke-linejoin="round"/><path d="M14 8v1.2M14 11v1.2" stroke="#555" stroke-width="1.3" stroke-linecap="round" stroke-linejoin="round"/></svg>
<div style="position:absolute;left:72px;top:657px;width:40px;height:40px;background:#f6f7fa;border-radius:7px;"></div>
<svg style="position:absolute;left:82px;top:667px;overflow:visible;" width="20" height="20" viewBox="0 0 20 20" fill="none"><path d="M2.5 7.5a1.5 1.5 0 0 1 1.5-1.5h2.5l1.5-2h4l1.5 2H16a1.5 1.5 0 0 1 1.5 1.5V15a1.5 1.5 0 0 1-1.5 1.5H4A1.5 1.5 0 0 1 2.5 15z" stroke="#555" stroke-width="1.3" stroke-linecap="round" stroke-linejoin="round"/><circle cx="10" cy="11" r="3" stroke="#555" stroke-width="1.3" stroke-linecap="round" stroke-linejoin="round"/><path d="M8.5 12l1 1" stroke="#555" stroke-width="1" stroke-linecap="round" stroke-linejoin="round"/></svg>
<div style="position:absolute;left:120px;top:657px;width:40px;height:40px;background:#f6f7fa;border-radius:7px;"></div>
<svg style="position:absolute;left:130px;top:667px;overflow:visible;" width="20" height="20" viewBox="0 0 20 20" fill="none"><path d="M4 7.5h12V17H4z" stroke="#555" stroke-width="1.3" stroke-linecap="round" stroke-linejoin="round"/><path d="M7.5 7.5V5.5a2.5 2.5 0 0 1 5 0v2" stroke="#555" stroke-width="1.3" stroke-linecap="round" stroke-linejoin="round"/><circle cx="10" cy="11" r="1.3" stroke="#555" stroke-width="1.1" stroke-linecap="round" stroke-linejoin="round"/><path d="M10 12.3V14" stroke="#555" stroke-width="1.3" stroke-linecap="round" stroke-linejoin="round"/></svg>
<div style="position:absolute;left:168px;top:657px;width:40px;height:40px;background:#f6f7fa;border-radius:7px;"></div>
<svg style="position:absolute;left:178px;top:667px;overflow:visible;" width="20" height="20" viewBox="0 0 20 20" fill="none"><path d="M3 4h14v10H9.5l-3.5 3v-3H3z" stroke="#555" stroke-width="1.3" stroke-linecap="round" stroke-linejoin="round"/><circle cx="7" cy="9" r="1.1" stroke="#555" stroke-width="1" stroke-linecap="round" stroke-linejoin="round"/><circle cx="10" cy="9" r="1.1" stroke="#555" stroke-width="1" stroke-linecap="round" stroke-linejoin="round"/><circle cx="13" cy="9" r="1.1" stroke="#555" stroke-width="1" stroke-linecap="round" stroke-linejoin="round"/></svg>
<div style="position:absolute;left:216px;top:657px;width:40px;height:40px;background:#f6f7fa;border-radius:7px;"></div>
<svg style="position:absolute;left:226px;top:667px;overflow:visible;" width="20" height="20" viewBox="0 0 20 20" fill="none"><circle cx="10" cy="11" r="6.5" stroke="#555" stroke-width="1.3" stroke-linecap="round" stroke-linejoin="round"/><path d="M10 7.5v3.5l2 2M3 5.5l3-3M17 5.5l-3-3M5.5 16.5l-1.5 2M14.5 16.5l1.5 2" stroke="#555" stroke-width="1.3" stroke-linecap="round" stroke-linejoin="round"/></svg>
<div style="position:absolute;left:72px;top:705px;width:40px;height:40px;background:#f6f7fa;border-radius:7px;"></div>
<svg style="position:absolute;left:82px;top:715px;overflow:visible;" width="20" height="20" viewBox="0 0 20 20" fill="none"><circle cx="10" cy="10" r="7.5" stroke="#555" stroke-width="1.3" stroke-linecap="round" stroke-linejoin="round"/><path d="M10 8.5v6" stroke="#555" stroke-width="1.3" stroke-linecap="round" stroke-linejoin="round"/><circle cx="10" cy="6" r=".5" fill="#555" stroke="#555" stroke-width="1.3" stroke-linecap="round" stroke-linejoin="round"/></svg>
<div style="position:absolute;left:120px;top:705px;width:40px;height:40px;background:#f6f7fa;border-radius:7px;"></div>
<svg style="position:absolute;left:130px;top:715px;overflow:visible;" width="20" height="20" viewBox="0 0 20 20" fill="none"><path d="M10 18.5s-6-5.5-6-10.5a6 6 0 0 1 12 0c0 5-6 10.5-6 10.5z" stroke="#555" stroke-width="1.3" stroke-linecap="round" stroke-linejoin="round"/><circle cx="10" cy="8" r="2.5" stroke="#555" stroke-width="1.3" stroke-linecap="round" stroke-linejoin="round"/></svg>
<div style="position:absolute;left:168px;top:705px;width:40px;height:40px;background:#f6f7fa;border-radius:7px;"></div>
<svg style="position:absolute;left:178px;top:715px;overflow:visible;" width="20" height="20" viewBox="0 0 20 20" fill="none"><path d="M14.5 9V3h-10v14H10" stroke="#555" stroke-width="1.3" stroke-linecap="round" stroke-linejoin="round"/><path d="M7 6.5h5M7 9.5h4M7 12.5h2" stroke="#555" stroke-width="1.3" stroke-linecap="round" stroke-linejoin="round"/><circle cx="14" cy="15" r="3" stroke="#555" stroke-width="1.3" stroke-linecap="round" stroke-linejoin="round"/><path d="M12.8 13.8l2.4 2.4M15.2 13.8l-2.4 2.4" stroke="#555" stroke-width="1" stroke-linecap="round" stroke-linejoin="round"/></svg>
<div style="position:absolute;left:216px;top:705px;width:40px;height:40px;background:#f6f7fa;border-radius:7px;"></div>
<svg style="position:absolute;left:226px;top:715px;overflow:visible;" width="20" height="20" viewBox="0 0 20 20" fill="none"><path d="M3 3.5h14l-5 6.5v7.5l-3-2V10z" stroke="#555" stroke-width="1.3" stroke-linecap="round" stroke-linejoin="round"/></svg>
<div style="position:absolute;left:72px;top:753px;width:40px;height:40px;background:#f6f7fa;border-radius:7px;"></div>
<svg style="position:absolute;left:82px;top:763px;overflow:visible;" width="20" height="20" viewBox="0 0 20 20" fill="none"><path d="M14.5 9V3h-10v14H10" stroke="#555" stroke-width="1.3" stroke-linecap="round" stroke-linejoin="round"/><path d="M7 6.5h5M7 9.5h4M7 12.5h2" stroke="#555" stroke-width="1.3" stroke-linecap="round" stroke-linejoin="round"/><circle cx="14" cy="15" r="3" stroke="#555" stroke-width="1.3" stroke-linecap="round" stroke-linejoin="round"/><path d="M14 16.5v-3M12.8 14.5l1.2-1.2 1.2 1.2" stroke="#555" stroke-width="1" stroke-linecap="round" stroke-linejoin="round"/></svg>
<div style="position:absolute;left:120px;top:753px;width:40px;height:40px;background:#f6f7fa;border-radius:7px;"></div>
<svg style="position:absolute;left:130px;top:763px;overflow:visible;" width="20" height="20" viewBox="0 0 20 20" fill="none"><path d="M2 10s3-5.5 8-5.5 8 5.5 8 5.5-3 5.5-8 5.5S2 10 2 10z" stroke="#555" stroke-width="1.3" stroke-linecap="round" stroke-linejoin="round"/><circle cx="10" cy="10" r="2.5" stroke="#555" stroke-width="1.3" stroke-linecap="round" stroke-linejoin="round"/></svg>
<div style="position:absolute;left:168px;top:753px;width:40px;height:40px;background:#f6f7fa;border-radius:7px;"></div>
<svg style="position:absolute;left:178px;top:763px;overflow:visible;" width="20" height="20" viewBox="0 0 20 20" fill="none"><path d="M10 17s-7-4.5-7-9.5A4 4 0 0 1 10 5a4 4 0 0 1 7 2.5C17 12.5 10 17 10 17z" stroke="#555" stroke-width="1.3" stroke-linecap="round" stroke-linejoin="round"/><path d="M13.5 6.5a2 2 0 0 1 1.5 2" stroke="#555" stroke-width="1" stroke-linecap="round" stroke-linejoin="round"/></svg>
<div style="position:absolute;left:216px;top:753px;width:40px;height:40px;background:#f6f7fa;border-radius:7px;"></div>
<svg style="position:absolute;left:226px;top:763px;overflow:visible;" width="20" height="20" viewBox="0 0 20 20" fill="none"><path d="M7 18s-4.5-3.8-4.5-7a4.5 4.5 0 0 1 9 0c0 3.2-4.5 7-4.5 7z" stroke="#555" stroke-width="1.3" stroke-linecap="round" stroke-linejoin="round"/><circle cx="7" cy="11" r="1.7" stroke="#555" stroke-width="1.3" stroke-linecap="round" stroke-linejoin="round"/><path d="M13.5 12s-3.5-3-3.5-5.5a3.5 3.5 0 0 1 7 0c0 2.5-3.5 5.5-3.5 5.5z" stroke="#555" stroke-width="1.3" stroke-linecap="round" stroke-linejoin="round"/><circle cx="13.5" cy="6.5" r="1.3" stroke="#555" stroke-width="1.3" stroke-linecap="round" stroke-linejoin="round"/></svg>
<div style="position:absolute;left:72px;top:801px;width:40px;height:40px;background:#f6f7fa;border-radius:7px;"></div>
<svg style="position:absolute;left:82px;top:811px;overflow:visible;" width="20" height="20" viewBox="0 0 20 20" fill="none"><path d="M4.8 5.5Q9.8 0.8 14.8 5.5" stroke="#555" stroke-width="1.2" stroke-linecap="round" stroke-linejoin="round"/></svg>
<div style="position:absolute;left:120px;top:801px;width:40px;height:40px;background:#f6f7fa;border-radius:7px;"></div>
<svg style="position:absolute;left:130px;top:811px;overflow:visible;" width="20" height="20" viewBox="0 0 20 20" fill="none"><path d="M3 5.5Q10 -0.3 17 5.5" stroke="#222" stroke-width="1.9" stroke-linecap="round" stroke-linejoin="round"/></svg>
<div style="position:absolute;left:168px;top:801px;width:40px;height:40px;background:#f6f7fa;border-radius:7px;"></div>
<svg style="position:absolute;left:178px;top:811px;overflow:visible;" width="20" height="20" viewBox="0 0 20 20" fill="none"><path d="M3 4.3L5 5.3M9 5.2H16.5" stroke="#555" stroke-width="1.2" stroke-linecap="round" stroke-linejoin="round"/></svg>
<div style="position:absolute;left:216px;top:801px;width:40px;height:40px;background:#f6f7fa;border-radius:7px;"></div>
<svg style="position:absolute;left:226px;top:811px;overflow:visible;" width="20" height="20" viewBox="0 0 20 20" fill="none"><path d="M2.5 5.2H18.5M8.6 4.8A1.5 1.5 0 0 1 11.6 4.8" stroke="#333" stroke-width="1.3" stroke-linecap="round" stroke-linejoin="round"/></svg>
<div style="position:absolute;left:272px;top:168px;width:1124px;height:649px;background:#fdfdfd;"></div>
<div style="position:absolute;left:272px;top:168px;width:1px;height:649px;background:#e6e6ea;"></div>
<div style="position:absolute;left:290px;top:186px;width:1091px;height:600px;background:#ebebf0;"></div>
<svg style="position:absolute;left:290px;top:168px" width="1091" height="18"><rect x="0" y="0" width="1108" height="17" fill="#fdfdfd"/><rect x="0" y="17" width="1108" height="1" fill="#e6e6ea"/><rect x="11" y="0" width="1" height="18" fill="#e6e6ea"/><text x="12.82" y="12.5" font-size="11" fill="#8f8f8f" font-family="Liberation Sans">-40</text><rect x="41" y="0" width="1" height="18" fill="#e6e6ea"/><text x="43.44" y="12.5" font-size="11" fill="#8f8f8f" font-family="Liberation Sans">-30</text><rect x="72" y="0" width="1" height="18" fill="#e6e6ea"/><text x="74.06" y="12.5" font-size="11" fill="#8f8f8f" font-family="Liberation Sans">-20</text><rect x="103" y="0" width="1" height="18" fill="#e6e6ea"/><text x="104.68" y="12.5" font-size="11" fill="#8f8f8f" font-family="Liberation Sans">-10</text><rect x="133" y="0" width="1" height="18" fill="#e6e6ea"/><text x="135.30" y="12.5" font-size="11" fill="#8f8f8f" font-family="Liberation Sans">0</text><rect x="164" y="0" width="1" height="18" fill="#e6e6ea"/><text x="165.92" y="12.5" font-size="11" fill="#8f8f8f" font-family="Liberation Sans">10</text><rect x="195" y="0" width="1" height="18" fill="#e6e6ea"/><text x="196.54" y="12.5" font-size="11" fill="#8f8f8f" font-family="Liberation Sans">20</text><rect x="225" y="0" width="1" height="18" fill="#e6e6ea"/><text x="227.16" y="12.5" font-size="11" fill="#8f8f8f" font-family="Liberation Sans">30</text><rect x="256" y="0" width="1" height="18" fill="#e6e6ea"/><text x="257.78" y="12.5" font-size="11" fill="#8f8f8f" font-family="Liberation Sans">40</text><rect x="286" y="0" width="1" height="18" fill="#e6e6ea"/><text x="288.40" y="12.5" font-size="11" fill="#8f8f8f" font-family="Liberation Sans">50</text><rect x="317" y="0" width="1" height="18" fill="#e6e6ea"/><text x="319.02" y="12.5" font-size="11" fill="#8f8f8f" font-family="Liberation Sans">60</text><rect x="348" y="0" width="1" height="18" fill="#e6e6ea"/><text x="349.64" y="12.5" font-size="11" fill="#8f8f8f" font-family="Liberation Sans">70</text><rect x="378" y="0" width="1" height="18" fill="#e6e6ea"/><text x="380.26" y="12.5" font-size="11" fill="#8f8f8f" font-family="Liberation Sans">80</text><rect x="409" y="0" width="1" height="18" fill="#e6e6ea"/><text x="410.88" y="12.5" font-size="11" fill="#8f8f8f" font-family="Liberation Sans">90</text><rect x="440" y="0" width="1" height="18" fill="#e6e6ea"/><text x="441.50" y="12.5" font-size="11" fill="#8f8f8f" font-family="Liberation Sans">100</text><rect x="470" y="0" width="1" height="18" fill="#e6e6ea"/><text x="472.12" y="12.5" font-size="11" fill="#8f8f8f" font-family="Liberation Sans">110</text><rect x="501" y="0" width="1" height="18" fill="#e6e6ea"/><text x="502.74" y="12.5" font-size="11" fill="#8f8f8f" font-family="Liberation Sans">120</text><rect x="531" y="0" width="1" height="18" fill="#e6e6ea"/><text x="533.36" y="12.5" font-size="11" fill="#8f8f8f" font-family="Liberation Sans">130</text><rect x="562" y="0" width="1" height="18" fill="#e6e6ea"/><text x="563.98" y="12.5" font-size="11" fill="#8f8f8f" font-family="Liberation Sans">140</text><rect x="593" y="0" width="1" height="18" fill="#e6e6ea"/><text x="594.60" y="12.5" font-size="11" fill="#8f8f8f" font-family="Liberation Sans">150</text><rect x="623" y="0" width="1" height="18" fill="#e6e6ea"/><text x="625.22" y="12.5" font-size="11" fill="#8f8f8f" font-family="Liberation Sans">160</text><rect x="654" y="0" width="1" height="18" fill="#e6e6ea"/><text x="655.84" y="12.5" font-size="11" fill="#8f8f8f" font-family="Liberation Sans">170</text><rect x="684" y="0" width="1" height="18" fill="#e6e6ea"/><text x="686.46" y="12.5" font-size="11" fill="#8f8f8f" font-family="Liberation Sans">180</text><rect x="715" y="0" width="1" height="18" fill="#e6e6ea"/><text x="717.08" y="12.5" font-size="11" fill="#8f8f8f" font-family="Liberation Sans">190</text><rect x="746" y="0" width="1" height="18" fill="#e6e6ea"/><text x="747.70" y="12.5" font-size="11" fill="#8f8f8f" font-family="Liberation Sans">200</text><rect x="776" y="0" width="1" height="18" fill="#e6e6ea"/><text x="778.32" y="12.5" font-size="11" fill="#8f8f8f" font-family="Liberation Sans">210</text><rect x="807" y="0" width="1" height="18" fill="#e6e6ea"/><text x="808.94" y="12.5" font-size="11" fill="#8f8f8f" font-family="Liberation Sans">220</text><rect x="838" y="0" width="1" height="18" fill="#e6e6ea"/><text x="839.56" y="12.5" font-size="11" fill="#8f8f8f" font-family="Liberation Sans">230</text><rect x="868" y="0" width="1" height="18" fill="#e6e6ea"/><text x="870.18" y="12.5" font-size="11" fill="#8f8f8f" font-family="Liberation Sans">240</text><rect x="899" y="0" width="1" height="18" fill="#e6e6ea"/><text x="900.80" y="12.5" font-size="11" fill="#8f8f8f" font-family="Liberation Sans">250</text><rect x="929" y="0" width="1" height="18" fill="#e6e6ea"/><text x="931.42" y="12.5" font-size="11" fill="#8f8f8f" font-family="Liberation Sans">260</text><rect x="960" y="0" width="1" height="18" fill="#e6e6ea"/><text x="962.04" y="12.5" font-size="11" fill="#8f8f8f" font-family="Liberation Sans">270</text><rect x="991" y="0" width="1" height="18" fill="#e6e6ea"/><text x="992.66" y="12.5" font-size="11" fill="#8f8f8f" font-family="Liberation Sans">280</text><rect x="1021" y="0" width="1" height="18" fill="#e6e6ea"/><text x="1023.28" y="12.5" font-size="11" fill="#8f8f8f" font-family="Liberation Sans">290</text><rect x="1052" y="0" width="1" height="18" fill="#e6e6ea"/><text x="1053.90" y="12.5" font-size="11" fill="#8f8f8f" font-family="Liberation Sans">300</text><rect x="1083" y="0" width="1" height="18" fill="#e6e6ea"/><text x="1084.52" y="12.5" font-size="11" fill="#8f8f8f" font-family="Liberation Sans">310</text></svg>
<svg style="position:absolute;left:273px;top:185px" width="17" height="601"><rect width="17" height="601" fill="#fdfdfd"/><path d="M17.5 0V600" stroke="#ececee" stroke-width="1"/><rect x="0" y="-13" width="17" height="1" fill="#e6e6ea"/><text transform="translate(10.5,-10.30) rotate(-90)" text-anchor="end" font-size="11" fill="#8c8c8c" font-family="Liberation Sans">0</text><rect x="0" y="18" width="17" height="1" fill="#e6e6ea"/><text transform="translate(10.5,20.39) rotate(-90)" text-anchor="end" font-size="11" fill="#8c8c8c" font-family="Liberation Sans">10</text><rect x="0" y="49" width="17" height="1" fill="#e6e6ea"/><text transform="translate(10.5,51.08) rotate(-90)" text-anchor="end" font-size="11" fill="#8c8c8c" font-family="Liberation Sans">20</text><rect x="0" y="79" width="17" height="1" fill="#e6e6ea"/><text transform="translate(10.5,81.77) rotate(-90)" text-anchor="end" font-size="11" fill="#8c8c8c" font-family="Liberation Sans">30</text><rect x="0" y="110" width="17" height="1" fill="#e6e6ea"/><text transform="translate(10.5,112.46) rotate(-90)" text-anchor="end" font-size="11" fill="#8c8c8c" font-family="Liberation Sans">40</text><rect x="0" y="141" width="17" height="1" fill="#e6e6ea"/><text transform="translate(10.5,143.15) rotate(-90)" text-anchor="end" font-size="11" fill="#8c8c8c" font-family="Liberation Sans">50</text><rect x="0" y="171" width="17" height="1" fill="#e6e6ea"/><text transform="translate(10.5,173.84) rotate(-90)" text-anchor="end" font-size="11" fill="#8c8c8c" font-family="Liberation Sans">60</text><rect x="0" y="202" width="17" height="1" fill="#e6e6ea"/><text transform="translate(10.5,204.53) rotate(-90)" text-anchor="end" font-size="11" fill="#8c8c8c" font-family="Liberation Sans">70</text><rect x="0" y="233" width="17" height="1" fill="#e6e6ea"/><text transform="translate(10.5,235.22) rotate(-90)" text-anchor="end" font-size="11" fill="#8c8c8c" font-family="Liberation Sans">80</text><rect x="0" y="263" width="17" height="1" fill="#e6e6ea"/><text transform="translate(10.5,265.91) rotate(-90)" text-anchor="end" font-size="11" fill="#8c8c8c" font-family="Liberation Sans">90</text><rect x="0" y="294" width="17" height="1" fill="#e6e6ea"/><text transform="translate(10.5,296.60) rotate(-90)" text-anchor="end" font-size="11" fill="#8c8c8c" font-family="Liberation Sans">100</text><rect x="0" y="325" width="17" height="1" fill="#e6e6ea"/><text transform="translate(10.5,327.29) rotate(-90)" text-anchor="end" font-size="11" fill="#8c8c8c" font-family="Liberation Sans">110</text><rect x="0" y="355" width="17" height="1" fill="#e6e6ea"/><text transform="translate(10.5,357.98) rotate(-90)" text-anchor="end" font-size="11" fill="#8c8c8c" font-family="Liberation Sans">120</text><rect x="0" y="386" width="17" height="1" fill="#e6e6ea"/><text transform="translate(10.5,388.67) rotate(-90)" text-anchor="end" font-size="11" fill="#8c8c8c" font-family="Liberation Sans">130</text><rect x="0" y="417" width="17" height="1" fill="#e6e6ea"/><text transform="translate(10.5,419.36) rotate(-90)" text-anchor="end" font-size="11" fill="#8c8c8c" font-family="Liberation Sans">140</text><rect x="0" y="448" width="17" height="1" fill="#e6e6ea"/><text transform="translate(10.5,450.05) rotate(-90)" text-anchor="end" font-size="11" fill="#8c8c8c" font-family="Liberation Sans">150</text><rect x="0" y="478" width="17" height="1" fill="#e6e6ea"/><text transform="translate(10.5,480.74) rotate(-90)" text-anchor="end" font-size="11" fill="#8c8c8c" font-family="Liberation Sans">160</text><rect x="0" y="509" width="17" height="1" fill="#e6e6ea"/><text transform="translate(10.5,511.43) rotate(-90)" text-anchor="end" font-size="11" fill="#8c8c8c" font-family="Liberation Sans">170</text><rect x="0" y="540" width="17" height="1" fill="#e6e6ea"/><text transform="translate(10.5,542.12) rotate(-90)" text-anchor="end" font-size="11" fill="#8c8c8c" font-family="Liberation Sans">180</text><rect x="0" y="570" width="17" height="1" fill="#e6e6ea"/><text transform="translate(10.5,572.81) rotate(-90)" text-anchor="end" font-size="11" fill="#8c8c8c" font-family="Liberation Sans">190</text></svg>
<div style="position:absolute;left:423px;top:186px;width:880px;height:582px;background:#fff;border:1px solid #d2d2d6;border-top:none;box-sizing:border-box;"></div>
<svg style="position:absolute;left:454px;top:204px;overflow:visible" width="819" height="534" shape-rendering="crispEdges"><rect x="15" y="0" width="1" height="533" fill="#ededed"/><rect x="46" y="0" width="1" height="533" fill="#ededed"/><rect x="76" y="0" width="1" height="533" fill="#ededed"/><rect x="107" y="0" width="1" height="533" fill="#ededed"/><rect x="137" y="0" width="1" height="533" fill="#ededed"/><rect x="168" y="0" width="1" height="533" fill="#ededed"/><rect x="199" y="0" width="1" height="533" fill="#ededed"/><rect x="229" y="0" width="1" height="533" fill="#ededed"/><rect x="260" y="0" width="1" height="533" fill="#ededed"/><rect x="291" y="0" width="1" height="533" fill="#ededed"/><rect x="321" y="0" width="1" height="533" fill="#ededed"/><rect x="352" y="0" width="1" height="533" fill="#ededed"/><rect x="382" y="0" width="1" height="533" fill="#ededed"/><rect x="413" y="0" width="1" height="533" fill="#ededed"/><rect x="444" y="0" width="1" height="533" fill="#ededed"/><rect x="474" y="0" width="1" height="533" fill="#ededed"/><rect x="505" y="0" width="1" height="533" fill="#ededed"/><rect x="535" y="0" width="1" height="533" fill="#ededed"/><rect x="566" y="0" width="1" height="533" fill="#ededed"/><rect x="597" y="0" width="1" height="533" fill="#ededed"/><rect x="627" y="0" width="1" height="533" fill="#ededed"/><rect x="658" y="0" width="1" height="533" fill="#ededed"/><rect x="689" y="0" width="1" height="533" fill="#ededed"/><rect x="719" y="0" width="1" height="533" fill="#ededed"/><rect x="750" y="0" width="1" height="533" fill="#ededed"/><rect x="780" y="0" width="1" height="533" fill="#ededed"/><rect x="811" y="0" width="1" height="533" fill="#ededed"/><rect x="0" y="15" width="818" height="1" fill="#ededed"/><rect x="0" y="46" width="818" height="1" fill="#ededed"/><rect x="0" y="76" width="818" height="1" fill="#ededed"/><rect x="0" y="107" width="818" height="1" fill="#ededed"/><rect x="0" y="137" width="818" height="1" fill="#ededed"/><rect x="0" y="168" width="818" height="1" fill="#ededed"/><rect x="0" y="199" width="818" height="1" fill="#ededed"/><rect x="0" y="229" width="818" height="1" fill="#ededed"/><rect x="0" y="260" width="818" height="1" fill="#ededed"/><rect x="0" y="291" width="818" height="1" fill="#ededed"/><rect x="0" y="321" width="818" height="1" fill="#ededed"/><rect x="0" y="352" width="818" height="1" fill="#ededed"/><rect x="0" y="382" width="818" height="1" fill="#ededed"/><rect x="0" y="413" width="818" height="1" fill="#ededed"/><rect x="0" y="444" width="818" height="1" fill="#ededed"/><rect x="0" y="474" width="818" height="1" fill="#ededed"/><rect x="0" y="505" width="818" height="1" fill="#ededed"/><rect x="30" y="0" width="1" height="533" fill="#dadada"/><rect x="61" y="0" width="1" height="533" fill="#dadada"/><rect x="92" y="0" width="1" height="533" fill="#dadada"/><rect x="122" y="0" width="1" height="533" fill="#dadada"/><rect x="153" y="0" width="1" height="533" fill="#dadada"/><rect x="183" y="0" width="1" height="533" fill="#dadada"/><rect x="214" y="0" width="1" height="533" fill="#dadada"/><rect x="245" y="0" width="1" height="533" fill="#dadada"/><rect x="275" y="0" width="1" height="533" fill="#dadada"/><rect x="306" y="0" width="1" height="533" fill="#dadada"/><rect x="336" y="0" width="1" height="533" fill="#dadada"/><rect x="367" y="0" width="1" height="533" fill="#dadada"/><rect x="398" y="0" width="1" height="533" fill="#dadada"/><rect x="428" y="0" width="1" height="533" fill="#dadada"/><rect x="459" y="0" width="1" height="533" fill="#dadada"/><rect x="490" y="0" width="1" height="533" fill="#dadada"/><rect x="520" y="0" width="1" height="533" fill="#dadada"/><rect x="551" y="0" width="1" height="533" fill="#dadada"/><rect x="581" y="0" width="1" height="533" fill="#dadada"/><rect x="612" y="0" width="1" height="533" fill="#dadada"/><rect x="643" y="0" width="1" height="533" fill="#dadada"/><rect x="673" y="0" width="1" height="533" fill="#dadada"/><rect x="704" y="0" width="1" height="533" fill="#dadada"/><rect x="734" y="0" width="1" height="533" fill="#dadada"/><rect x="765" y="0" width="1" height="533" fill="#dadada"/><rect x="796" y="0" width="1" height="533" fill="#dadada"/><rect x="0" y="30" width="818" height="1" fill="#dadada"/><rect x="0" y="61" width="818" height="1" fill="#dadada"/><rect x="0" y="92" width="818" height="1" fill="#dadada"/><rect x="0" y="122" width="818" height="1" fill="#dadada"/><rect x="0" y="153" width="818" height="1" fill="#dadada"/><rect x="0" y="183" width="818" height="1" fill="#dadada"/><rect x="0" y="214" width="818" height="1" fill="#dadada"/><rect x="0" y="245" width="818" height="1" fill="#dadada"/><rect x="0" y="275" width="818" height="1" fill="#dadada"/><rect x="0" y="306" width="818" height="1" fill="#dadada"/><rect x="0" y="336" width="818" height="1" fill="#dadada"/><rect x="0" y="367" width="818" height="1" fill="#dadada"/><rect x="0" y="398" width="818" height="1" fill="#dadada"/><rect x="0" y="428" width="818" height="1" fill="#dadada"/><rect x="0" y="459" width="818" height="1" fill="#dadada"/><rect x="0" y="490" width="818" height="1" fill="#dadada"/><rect x="0" y="520" width="818" height="1" fill="#dadada"/><rect x="0.5" y="0.5" width="818" height="533" stroke="#d4d4d4" stroke-width="1" fill="none"/></svg>
<div style="position:absolute;left:1383px;top:304px;width:9.5px;height:351px;background:#d3d4d7;border-radius:5px;"></div>
<div style="position:absolute;left:486px;top:788px;width:637px;height:10px;background:#d3d4d7;border-radius:5px;"></div>
<div style="position:absolute;left:273px;top:800px;width:1122px;height:1px;background:#ededf0;"></div>
<div style="position:absolute;left:273px;top:801px;width:1122px;height:16px;background:#fbfbfd;"></div>
<svg style="position:absolute;left:285px;top:803px;overflow:visible;" width="18" height="14" viewBox="0 0 18 14" fill="none"><path d="M2 6.5L7 1.5l5.5 5.5L8 11.5a1.5 1.5 0 0 1-2 0L2 8a1 1 0 0 1 0-1.5z" stroke="#333" stroke-width="1.6"/><path d="M2.5 7h9.5l-4 4.2a1.5 1.5 0 0 1-2 0z" fill="#333"/><circle cx="12.5" cy="11" r="1.2" fill="#333"/><path d="M15 6.5h4l-2 2.3z" fill="#666"/></svg>
<svg style="position:absolute;left:308px;top:802px" width="1090" height="14"><rect x="0.20" y="0" width="9.7" height="14" rx="2.5" fill="#a8141e"/><rect x="12.16" y="0" width="9.7" height="14" rx="2.5" fill="#cc0f2f"/><rect x="24.12" y="0" width="9.7" height="14" rx="2.5" fill="#e03a56"/><rect x="36.08" y="0" width="9.7" height="14" rx="2.5" fill="#f06480"/><rect x="48.04" y="0" width="9.7" height="14" rx="2.5" fill="#f799aa"/><rect x="60.00" y="0" width="9.7" height="14" rx="2.5" fill="#237a8a"/><rect x="71.96" y="0" width="9.7" height="14" rx="2.5" fill="#34a2bf"/><rect x="83.92" y="0" width="9.7" height="14" rx="2.5" fill="#3bbcd9"/><rect x="95.88" y="0" width="9.7" height="14" rx="2.5" fill="#5dd5ed"/><rect x="107.84" y="0" width="9.7" height="14" rx="2.5" fill="#a7ebf9"/><rect x="119.80" y="0" width="9.7" height="14" rx="2.5" fill="#f2522b"/><rect x="131.76" y="0" width="9.7" height="14" rx="2.5" fill="#fb7b3a"/><rect x="143.72" y="0" width="9.7" height="14" rx="2.5" fill="#fc911d"/><rect x="155.68" y="0" width="9.7" height="14" rx="2.5" fill="#fdb515"/><rect x="167.64" y="0" width="9.7" height="14" rx="2.5" fill="#fdc35b"/><rect x="179.60" y="0" width="9.7" height="14" rx="2.5" fill="#0e8c78"/><rect x="191.56" y="0" width="9.7" height="14" rx="2.5" fill="#16b096"/><rect x="203.52" y="0" width="9.7" height="14" rx="2.5" fill="#1ccbaf"/><rect x="215.48" y="0" width="9.7" height="14" rx="2.5" fill="#62d6c1"/><rect x="227.44" y="0" width="9.7" height="14" rx="2.5" fill="#8ae6d7"/><rect x="239.40" y="0" width="9.7" height="14" rx="2.5" fill="#98285c"/><rect x="251.36" y="0" width="9.7" height="14" rx="2.5" fill="#c24a89"/><rect x="263.32" y="0" width="9.7" height="14" rx="2.5" fill="#dc66a6"/><rect x="275.28" y="0" width="9.7" height="14" rx="2.5" fill="#f78cc9"/><rect x="287.24" y="0" width="9.7" height="14" rx="2.5" fill="#f1c1dc"/><rect x="299.20" y="0" width="9.7" height="14" rx="2.5" fill="#5a8a14"/><rect x="311.16" y="0" width="9.7" height="14" rx="2.5" fill="#6fa02a"/><rect x="323.12" y="0" width="9.7" height="14" rx="2.5" fill="#93b823"/><rect x="335.08" y="0" width="9.7" height="14" rx="2.5" fill="#b2cf4a"/><rect x="347.04" y="0" width="9.7" height="14" rx="2.5" fill="#d3e29a"/><rect x="359.00" y="0" width="9.7" height="14" rx="2.5" fill="#1c22a8"/><rect x="370.96" y="0" width="9.7" height="14" rx="2.5" fill="#3044d8"/><rect x="382.92" y="0" width="9.7" height="14" rx="2.5" fill="#6a40ee"/><rect x="394.88" y="0" width="9.7" height="14" rx="2.5" fill="#8a6ff2"/><rect x="406.84" y="0" width="9.7" height="14" rx="2.5" fill="#ac99f5"/><rect x="418.80" y="0" width="9.7" height="14" rx="2.5" fill="#fcc800"/><rect x="430.76" y="0" width="9.7" height="14" rx="2.5" fill="#fcd92e"/><rect x="442.72" y="0" width="9.7" height="14" rx="2.5" fill="#f0e42a"/><rect x="454.68" y="0" width="9.7" height="14" rx="2.5" fill="#f8f050"/><rect x="466.64" y="0" width="9.7" height="14" rx="2.5" fill="#fafa80"/><rect x="478.60" y="0" width="9.7" height="14" rx="2.5" fill="#9c52dc"/><rect x="490.56" y="0" width="9.7" height="14" rx="2.5" fill="#c04ee0"/><rect x="502.52" y="0" width="9.7" height="14" rx="2.5" fill="#d56ef0"/><rect x="514.48" y="0" width="9.7" height="14" rx="2.5" fill="#bc86f5"/><rect x="526.44" y="0" width="9.7" height="14" rx="2.5" fill="#dca6f8"/><rect x="538.40" y="0" width="9.7" height="14" rx="2.5" fill="#2a7a46"/><rect x="550.36" y="0" width="9.7" height="14" rx="2.5" fill="#3aa05a"/><rect x="562.32" y="0" width="9.7" height="14" rx="2.5" fill="#4daa72"/><rect x="574.28" y="0" width="9.7" height="14" rx="2.5" fill="#62bb88"/><rect x="586.24" y="0" width="9.7" height="14" rx="2.5" fill="#90d6aa"/><rect x="598.20" y="0" width="9.7" height="14" rx="2.5" fill="#e4332a"/><rect x="610.16" y="0" width="9.7" height="14" rx="2.5" fill="#f84a3c"/><rect x="622.12" y="0" width="9.7" height="14" rx="2.5" fill="#f76262"/><rect x="634.08" y="0" width="9.7" height="14" rx="2.5" fill="#f87a7a"/><rect x="646.04" y="0" width="9.7" height="14" rx="2.5" fill="#fa9688"/><rect x="658.00" y="0" width="9.7" height="14" rx="2.5" fill="#22409a"/><rect x="669.96" y="0" width="9.7" height="14" rx="2.5" fill="#2d58cc"/><rect x="681.92" y="0" width="9.7" height="14" rx="2.5" fill="#3270ee"/><rect x="693.88" y="0" width="9.7" height="14" rx="2.5" fill="#6492f8"/><rect x="705.84" y="0" width="9.7" height="14" rx="2.5" fill="#8ab0f5"/><rect x="717.80" y="0" width="9.7" height="14" rx="2.5" fill="#6e2a08"/><rect x="729.76" y="0" width="9.7" height="14" rx="2.5" fill="#983a0a"/><rect x="741.72" y="0" width="9.7" height="14" rx="2.5" fill="#a84428"/><rect x="753.68" y="0" width="9.7" height="14" rx="2.5" fill="#d05c3e"/><rect x="765.64" y="0" width="9.7" height="14" rx="2.5" fill="#e67a5a"/><rect x="777.60" y="0" width="9.7" height="14" rx="2.5" fill="#1888d8"/><rect x="789.56" y="0" width="9.7" height="14" rx="2.5" fill="#2a9cf0"/><rect x="801.52" y="0" width="9.7" height="14" rx="2.5" fill="#48b0f8"/><rect x="813.48" y="0" width="9.7" height="14" rx="2.5" fill="#38ccf8"/><rect x="825.44" y="0" width="9.7" height="14" rx="2.5" fill="#68def8"/><rect x="837.40" y="0" width="9.7" height="14" rx="2.5" fill="#7a4c34"/><rect x="849.36" y="0" width="9.7" height="14" rx="2.5" fill="#965e44"/><rect x="861.32" y="0" width="9.7" height="14" rx="2.5" fill="#b47252"/><rect x="873.28" y="0" width="9.7" height="14" rx="2.5" fill="#d08460"/><rect x="885.24" y="0" width="9.7" height="14" rx="2.5" fill="#f49a6c"/><rect x="897.20" y="0" width="9.7" height="14" rx="2.5" fill="#8a8072"/><rect x="909.16" y="0" width="9.7" height="14" rx="2.5" fill="#b2ac98"/><rect x="921.12" y="0" width="9.7" height="14" rx="2.5" fill="#ccc6b2"/><rect x="933.08" y="0" width="9.7" height="14" rx="2.5" fill="#e6dece"/><rect x="945.04" y="0" width="9.7" height="14" rx="2.5" fill="#f4eedc"/><rect x="957.00" y="0" width="9.7" height="14" rx="2.5" fill="#1a1a1a"/><rect x="968.96" y="0" width="9.7" height="14" rx="2.5" fill="#2e2e2e"/><rect x="980.92" y="0" width="9.7" height="14" rx="2.5" fill="#444444"/><rect x="992.88" y="0" width="9.7" height="14" rx="2.5" fill="#5c5c5c"/><rect x="1004.84" y="0" width="9.7" height="14" rx="2.5" fill="#7a7a7a"/><rect x="1016.80" y="0" width="9.7" height="14" rx="2.5" fill="#b4b4b4"/><rect x="1028.76" y="0" width="9.7" height="14" rx="2.5" fill="#c8c8c8"/><rect x="1040.72" y="0" width="9.7" height="14" rx="2.5" fill="#d8d8d8"/><rect x="1052.68" y="0" width="9.7" height="14" rx="2.5" fill="#e6e6e6"/><rect x="1064.64" y="0" width="9.7" height="14" rx="2.5" fill="#f2f2f2"/><rect x="1076.60" y="0" width="9.7" height="14" rx="2.5" fill="#ffffff"/></svg>
<svg style="position:absolute;left:0;top:0" width="1672" height="850"><defs><clipPath id="cvclip"><rect x="290" y="185" width="1091" height="601"/></clipPath></defs><g clip-path="url(#cvclip)"><rect x="455.5" y="291.5" width="148.0" height="97.5" rx="1.5" fill="#fff" stroke="#7cc142" stroke-width="1.2" stroke-dasharray="4 3"/><rect x="617.5" y="437.5" width="112.0" height="84.5" rx="1.5" fill="#fff" stroke="#7cc142" stroke-width="1.2" stroke-dasharray="4 3"/><rect x="1159" y="311.5" width="136.5" height="78.5" rx="1.5" fill="#fff" stroke="#7cc142" stroke-width="1.2" stroke-dasharray="4 3"/><rect x="996.5" y="418.5" width="112.0" height="93.5" rx="1.5" fill="#fff" stroke="#7cc142" stroke-width="1.2" stroke-dasharray="4 3"/><rect x="810.5" y="572.5" width="113.0" height="42.5" rx="1.5" fill="#fff" stroke="#7cc142" stroke-width="1.2" stroke-dasharray="4 3"/><rect x="624.5" y="635.5" width="185.5" height="71.0" rx="1.5" fill="#fff" stroke="#7cc142" stroke-width="1.2" stroke-dasharray="4 3"/><rect x="996.5" y="635.5" width="261.0" height="71.0" rx="1.5" fill="#fff" stroke="#7cc142" stroke-width="1.2" stroke-dasharray="4 3"/><path d="M463.5 389V418.2H588" stroke="#222" stroke-width="1.2" fill="none"/><path d="M593.5 418.2l-7-3v6z" fill="#222"/><path d="M672.5 410.5H662" stroke="#222" stroke-width="1.2"/><path d="M657.5 410.5l6-2.7v5.4z" fill="#222"/><path d="M672 522 C690 565 715 585 770 589.5" stroke="#72b53f" stroke-width="1.2" fill="none"/><path d="M778 589.7l-10-4.2 3 4.2-3 4z" fill="#72b53f"/><text x="529" y="343.4" font-size="10" text-anchor="middle" fill="#000">父親</text><text x="866.5" y="597" font-size="8.8" font-weight="bold" text-anchor="middle" fill="#111" font-family="Liberation Sans" letter-spacing="-0.3">Me</text><path d="M834.5 452 L861.5 452 L866.5 520.5 L830 520.5 Z" fill="#a8772b"/><path d="M834 460 Q845 478 862 484 L860.5 452 L835 452Z" fill="#936626"/><circle cx="780.6" cy="406" r="31" fill="#4aa345"/><circle cx="913" cy="419" r="28.5" fill="#4aa345"/><circle cx="813" cy="438" r="30" fill="#4aa345"/><circle cx="867" cy="440" r="32" fill="#4aa345"/><circle cx="852" cy="341" r="31" fill="#55b64b"/><circle cx="808" cy="360" r="29" fill="#55b64b"/><circle cx="887.5" cy="352" r="23" fill="#55b64b"/><circle cx="903" cy="372" r="24" fill="#55b64b"/><circle cx="893" cy="395" r="25" fill="#55b64b"/><circle cx="780.6" cy="399" r="30.5" fill="#55b64b"/><circle cx="912.5" cy="411" r="28.5" fill="#55b64b"/><circle cx="814" cy="425" r="30" fill="#55b64b"/><circle cx="867" cy="427" r="32" fill="#55b64b"/><circle cx="848" cy="392" r="52" fill="#55b64b"/><circle cx="795" cy="420" r="18" fill="#55b64b"/><circle cx="890" cy="425" r="22" fill="#55b64b"/><ellipse cx="812.5" cy="403" rx="8" ry="9" fill="#1f7838"/><ellipse cx="883.5" cy="403" rx="8" ry="9" fill="#1f7838"/><path d="M826 404.5 Q848 401.5 869.5 404.5 L869.5 414 Q869 434.5 848 434.5 Q826.5 434.5 826 414z" fill="#1f7838"/><clipPath id="mth"><path d="M826 404.5 Q848 401.5 869.5 404.5 L869.5 414 Q869 434.5 848 434.5 Q826.5 434.5 826 414z"/></clipPath><ellipse cx="848" cy="427" rx="11" ry="5.2" fill="#f7bf9a" clip-path="url(#mth)"/><text transform="translate(780.62,321.81) rotate(-47.73) scale(0.76,1)" text-anchor="middle" font-size="29" font-weight="bold" fill="#111" stroke="#111" stroke-width="0.2" font-family="Liberation Sans">M</text><text transform="translate(793.08,310.42) rotate(-37.20) scale(0.76,1)" text-anchor="middle" font-size="29" font-weight="bold" fill="#111" stroke="#111" stroke-width="0.2" font-family="Liberation Sans">y</text><text transform="translate(812.76,299.01) rotate(-23.00) scale(0.76,1)" text-anchor="middle" font-size="29" font-weight="bold" fill="#111" stroke="#111" stroke-width="0.2" font-family="Liberation Sans">F</text><text transform="translate(826.45,294.43) rotate(-13.99) scale(0.76,1)" text-anchor="middle" font-size="29" font-weight="bold" fill="#111" stroke="#111" stroke-width="0.2" font-family="Liberation Sans">a</text><text transform="translate(843.76,291.83) rotate(-3.08) scale(0.76,1)" text-anchor="middle" font-size="29" font-weight="bold" fill="#111" stroke="#111" stroke-width="0.2" font-family="Liberation Sans">m</text><text transform="translate(858.20,292.19) rotate(5.93) scale(0.76,1)" text-anchor="middle" font-size="29" font-weight="bold" fill="#111" stroke="#111" stroke-width="0.2" font-family="Liberation Sans">i</text><text transform="translate(865.84,293.31) rotate(10.74) scale(0.76,1)" text-anchor="middle" font-size="29" font-weight="bold" fill="#111" stroke="#111" stroke-width="0.2" font-family="Liberation Sans">l</text><text transform="translate(876.30,295.94) rotate(17.46) scale(0.76,1)" text-anchor="middle" font-size="29" font-weight="bold" fill="#111" stroke="#111" stroke-width="0.2" font-family="Liberation Sans">y</text><text transform="translate(896.99,305.39) rotate(31.66) scale(0.76,1)" text-anchor="middle" font-size="29" font-weight="bold" fill="#111" stroke="#111" stroke-width="0.2" font-family="Liberation Sans">T</text><text transform="translate(907.24,312.73) rotate(39.52) scale(0.76,1)" text-anchor="middle" font-size="29" font-weight="bold" fill="#111" stroke="#111" stroke-width="0.2" font-family="Liberation Sans">r</text><text transform="translate(915.98,320.96) rotate(47.00) scale(0.76,1)" text-anchor="middle" font-size="29" font-weight="bold" fill="#111" stroke="#111" stroke-width="0.2" font-family="Liberation Sans">e</text><text transform="translate(924.64,331.76) rotate(55.63) scale(0.76,1)" text-anchor="middle" font-size="29" font-weight="bold" fill="#111" stroke="#111" stroke-width="0.2" font-family="Liberation Sans">e</text></g></svg>
<div style="position:absolute;left:1275px;top:729px;width:89px;height:40px;background:#fff;border-radius:20px;box-shadow:0 2px 8px rgba(0,0,0,0.10);"></div>
<div style="position:absolute;left:1319px;top:737px;width:1px;height:24px;background:#e3e3e6;"></div>
<svg style="position:absolute;left:1289px;top:739px;overflow:visible;" width="20" height="20" viewBox="0 0 20 20" fill="none"><defs><linearGradient id="ag" x1="0" y1="0" x2="1" y2="1"><stop offset="0" stop-color="#9a4dff"/><stop offset="1" stop-color="#4a6bff"/></linearGradient></defs><path d="M3 5.5l2.6-1.8 8.4 11.5-2.6 1.8z" stroke="url(#ag)" stroke-width="1.8" stroke-linejoin="round"/><path d="M4.5 8l2.6-1.8" stroke="url(#ag)" stroke-width="1.4"/><path d="M15 3.5l.8 2.2 2.2.8-2.2.8-.8 2.2-.8-2.2-2.2-.8 2.2-.8z" fill="#3f8bff"/><path d="M9.5 0.5l.5 1.3 1.3.5-1.3.5-.5 1.3-.5-1.3-1.3-.5 1.3-.5z" fill="#8a4dff"/><path d="M1.8 10.5l.5 1.3 1.3.5-1.3.5-.5 1.3-.5-1.3L0 12.3l1.3-.5z" fill="#8a4dff"/></svg>
<svg style="position:absolute;left:1330px;top:739px;overflow:visible;" width="21" height="20" viewBox="0 0 21 20" fill="none"><defs><linearGradient id="ag2" x1="0" y1="1" x2="1" y2="0"><stop offset="0" stop-color="#7a4dff"/><stop offset="1" stop-color="#4f6bff"/></linearGradient></defs><path d="M8.7 2.5Q9.6 9 16.5 10.5Q9.6 12 8.7 18.5Q7.8 12 1 10.5Q7.8 9 8.7 2.5z" fill="url(#ag2)"/><path d="M15.5 0.3l.9 2.4 2.4.9-2.4.9-.9 2.4-.9-2.4-2.4-.9 2.4-.9z" fill="#3f8bff"/></svg>
<div style="position:absolute;left:1395px;top:168px;width:1px;height:649px;background:#e6e6ea;"></div>
<div style="position:absolute;left:1396px;top:168px;width:36px;height:649px;background:#fff;"></div>
<div style="position:absolute;left:1431px;top:168px;width:1px;height:649px;background:#ececef;"></div>
<svg style="position:absolute;left:1406px;top:178px;overflow:visible;" width="14" height="12" viewBox="0 0 14 12" fill="none"><path d="M1.5 1l5 5-5 5M7.5 1l5 5-5 5" stroke="#333" stroke-width="1.8"/></svg>
<div style="position:absolute;left:1396px;top:200px;width:35px;height:35px;background:#1677ff;"></div>
<svg style="position:absolute;left:1404px;top:208px;overflow:visible;" width="19" height="19" viewBox="0 0 19 19" fill="none"><path d="M9 2.5l6 6-5.5 5.5a1.5 1.5 0 0 1-2 0L3 9.5a1.5 1.5 0 0 1 0-2z" stroke="#fff" stroke-width="1.8" stroke-linejoin="round"/><path d="M3.5 9h11l-5 5a1.5 1.5 0 0 1-2 0z" fill="#fff"/><path d="M9 2.5L7.5 0.8" stroke="#fff" stroke-width="1.6"/><circle cx="16.5" cy="14.5" r="1.4" fill="#fff"/></svg>
<svg style="position:absolute;left:1404px;top:253px;overflow:visible;" width="19" height="17" viewBox="0 0 19 17" fill="none"><path d="M1 1.5h17M2.5 1.5v10h14v-10" stroke="#333" stroke-width="1.8"/><path d="M8 4.5l4.5 2-4.5 2.5z" fill="#333"/><path d="M5 16l4.5-4.5L14 16" stroke="#333" stroke-width="1.8"/></svg>
<svg style="position:absolute;left:1405px;top:297px;overflow:visible;" width="17" height="17" viewBox="0 0 17 17" fill="none"><path d="M2 8.5A6.5 6.5 0 1 0 4 3.8" stroke="#333" stroke-width="1.8"/><path d="M1.5 1.5v4h4" stroke="#333" stroke-width="1.8"/><path d="M8.5 5v4l3 2" stroke="#333" stroke-width="1.8"/></svg>
<svg style="position:absolute;left:1405px;top:343px;overflow:visible;" width="17" height="17" viewBox="0 0 17 17" fill="none"><circle cx="8.5" cy="8.5" r="7.5" stroke="#333" stroke-width="1.6"/><path d="M6.2 6.5a2.3 2.3 0 1 1 3.2 2.1c-.7.3-.9.8-.9 1.7" stroke="#333" stroke-width="1.6"/><circle cx="8.5" cy="12.6" r="1" fill="#333"/></svg>
<svg style="position:absolute;left:1405px;top:793px;overflow:visible;" width="17" height="17" viewBox="0 0 17 17" fill="none"><path d="M15.12 6.41 L15.12 9.59 L13.02 10.24 L12.45 11.23 L12.94 13.37 L10.18 14.97 L8.57 13.47 L7.43 13.47 L5.82 14.97 L3.06 13.37 L3.55 11.23 L2.98 10.24 L0.88 9.59 L0.88 6.41 L2.98 5.76 L3.55 4.77 L3.06 2.63 L5.82 1.03 L7.43 2.53 L8.57 2.53 L10.18 1.03 L12.94 2.63 L12.45 4.77 L13.02 5.76z" stroke="#333" stroke-width="1.7" stroke-linejoin="round"/><circle cx="8" cy="8" r="2.6" stroke="#333" stroke-width="1.7"/></svg>
<div style="position:absolute;left:1432px;top:168px;width:238px;height:649px;background:#fdfdfe;"></div>
<div style="position:absolute;left:1432px;top:168px;width:238px;height:32px;background:#fff;"></div>
<div style="position:absolute;left:1432px;top:200px;width:238px;height:1px;background:#ececef;"></div>
<div class="dk" style="position:absolute;left:1458px;top:176px;font-size:13px;line-height:17px;color:#1677ff;white-space:nowrap;text-align:left;font-weight:600;-webkit-text-stroke-width:0;">填充</div>
<div class="dk" style="position:absolute;left:1450px;top:176px;width:200px;font-size:13px;line-height:17px;color:#222;white-space:nowrap;text-align:center;">線</div>
<div class="dk" style="position:absolute;left:1617px;top:176px;font-size:13px;line-height:17px;color:#222;white-space:nowrap;text-align:left;">陰影</div>
<div style="position:absolute;left:1453px;top:216.5px;width:14px;height:14px;border-radius:50%;box-sizing:border-box;border:1px solid #e2e3ec;background:#f5f6fb"></div>
<div class="" style="position:absolute;left:1476px;top:214.5px;font-size:13px;line-height:17px;color:#a9a9a9;white-space:nowrap;text-align:left;">無填充</div>
<div style="position:absolute;left:1453px;top:248.5px;width:14px;height:14px;border-radius:50%;box-sizing:border-box;border:4px solid #dcdcdf;background:#fff"></div>
<div class="" style="position:absolute;left:1476px;top:246.5px;font-size:13px;line-height:17px;color:#a9a9a9;white-space:nowrap;text-align:left;">單色填充</div>
<div style="position:absolute;left:1453px;top:280.5px;width:14px;height:14px;border-radius:50%;box-sizing:border-box;border:1px solid #e2e3ec;background:#f5f6fb"></div>
<div class="" style="position:absolute;left:1476px;top:278.5px;font-size:13px;line-height:17px;color:#a9a9a9;white-space:nowrap;text-align:left;">漸變填充</div>
<div style="position:absolute;left:1453px;top:312.5px;width:14px;height:14px;border-radius:50%;box-sizing:border-box;border:1px solid #e2e3ec;background:#f5f6fb"></div>
<div class="" style="position:absolute;left:1476px;top:310.5px;font-size:13px;line-height:17px;color:#a9a9a9;white-space:nowrap;text-align:left;">單色漸變填充</div>
<div style="position:absolute;left:1453px;top:344.5px;width:14px;height:14px;border-radius:50%;box-sizing:border-box;border:1px solid #e2e3ec;background:#f5f6fb"></div>
<div class="" style="position:absolute;left:1476px;top:342.5px;font-size:13px;line-height:17px;color:#a9a9a9;white-space:nowrap;text-align:left;">圖案填充</div>
<div style="position:absolute;left:1453px;top:376.5px;width:14px;height:14px;border-radius:50%;box-sizing:border-box;border:1px solid #e2e3ec;background:#f5f6fb"></div>
<div class="" style="position:absolute;left:1476px;top:374.5px;font-size:13px;line-height:17px;color:#a9a9a9;white-space:nowrap;text-align:left;">圖片或紋理填充</div>
<div class="md" style="position:absolute;left:1452px;top:412px;font-size:13px;line-height:17px;color:#666;white-space:nowrap;text-align:left;">顏色</div>
<div style="position:absolute;left:1586px;top:408px;width:63px;height:24px;background:#f0f0f0;border:1px solid #f4f4f4;border-radius:5px;box-sizing:border-box;box-shadow:inset 0 0 0 2px #fff;"></div>
<div class="md" style="position:absolute;left:1452px;top:449px;font-size:13px;line-height:17px;color:#666;white-space:nowrap;text-align:left;">陰影/色調</div>
<div style="position:absolute;left:1452px;top:486px;width:110px;height:6px;background:#e4e4e6;border-radius:3px;"></div>
<div style="position:absolute;left:1452px;top:486px;width:55px;height:6px;background:#c9c9cc;border-radius:3px;"></div>
<div style="position:absolute;left:1500px;top:482px;width:13px;height:13px;border-radius:50%;box-sizing:border-box;border:2px solid #c9c9cc;background:#fff"></div>
<div style="position:absolute;left:1586px;top:477px;width:63px;height:24px;background:#efeff1;border-radius:5px;"></div>
<div class="md" style="position:absolute;left:1594px;top:480px;font-size:14px;line-height:18px;color:#888;white-space:nowrap;text-align:left;">0 %</div>
<svg style="position:absolute;left:1637px;top:481px;overflow:visible;" width="7" height="16" viewBox="0 0 7 16" fill="none"><path d="M0.5 4.5L3.5 1l3 3.5z" fill="#aaa"/><path d="M0.5 11.5L3.5 15l3-3.5z" fill="#aaa"/></svg>
<div class="md" style="position:absolute;left:1452px;top:518px;font-size:13px;line-height:17px;color:#666;white-space:nowrap;text-align:left;">透明度</div>
<div style="position:absolute;left:1452px;top:555px;width:110px;height:6px;background:#e4e4e6;border-radius:3px;"></div>
<div style="position:absolute;left:1452px;top:551px;width:13px;height:13px;border-radius:50%;box-sizing:border-box;border:2px solid #c9c9cc;background:#fff"></div>
<div style="position:absolute;left:1586px;top:546px;width:63px;height:24px;background:#efeff1;border-radius:5px;"></div>
<div class="md" style="position:absolute;left:1594px;top:549px;font-size:14px;line-height:18px;color:#888;white-space:nowrap;text-align:left;">0 %</div>
<svg style="position:absolute;left:1637px;top:550px;overflow:visible;" width="7" height="16" viewBox="0 0 7 16" fill="none"><path d="M0.5 4.5L3.5 1l3 3.5z" fill="#aaa"/><path d="M0.5 11.5L3.5 15l3-3.5z" fill="#aaa"/></svg>
<div style="position:absolute;left:0px;top:817px;width:1670px;height:31px;background:#f2f3f7;"></div>
<div style="position:absolute;left:48px;top:822px;width:1px;height:20px;background:#dedee2;"></div>
<div style="position:absolute;left:177px;top:822px;width:1px;height:20px;background:#dedee2;"></div>
<div style="position:absolute;left:218px;top:822px;width:1px;height:20px;background:#dedee2;"></div>
<div style="position:absolute;left:291px;top:822px;width:1px;height:20px;background:#dedee2;"></div>
<div style="position:absolute;left:1132px;top:822px;width:1px;height:20px;background:#dedee2;"></div>
<div style="position:absolute;left:1216px;top:822px;width:1px;height:20px;background:#dedee2;"></div>
<div style="position:absolute;left:1361px;top:822px;width:1px;height:20px;background:#dedee2;"></div>
<div style="position:absolute;left:1589px;top:822px;width:1px;height:20px;background:#dedee2;"></div>
<svg style="position:absolute;left:19px;top:828px;overflow:visible;" width="18" height="11" viewBox="0 0 18 11" fill="none"><path d="M0.6 0.3V10M16.9 0.3V10" stroke="#222" stroke-width="1.2"/><rect x="3.6" y="0.6" width="10.3" height="9.2" rx="0.5" stroke="#222" stroke-width="1.2"/></svg>
<div class="dk" style="position:absolute;left:65px;top:825px;font-size:14px;line-height:18px;color:#222;white-space:nowrap;text-align:left;">Page-1</div>
<svg style="position:absolute;left:158px;top:828px;overflow:visible;" width="6" height="4" viewBox="0 0 6 4" fill="none"><path d="M0 0h6L3 3.5z" fill="#666"/></svg>
<svg style="position:absolute;left:192px;top:827px;overflow:visible;" width="12" height="12" viewBox="0 0 12 12" fill="none"><path d="M6 0v12M0 6h12" stroke="#333" stroke-width="1.3"/></svg>
<div class="dk" style="position:absolute;left:231px;top:825px;font-size:14px;line-height:18px;color:#1677ff;white-space:nowrap;text-align:left;font-weight:bold;">Page-1</div>
<div class="dk" style="position:absolute;left:1140px;top:825px;font-size:13px;line-height:17px;color:#222;white-space:nowrap;text-align:left;">形狀數量: 8</div>
<svg style="position:absolute;left:1228px;top:825px;overflow:visible;" width="18" height="17" viewBox="0 0 18 17" fill="none"><path d="M9 1l8 4.5-8 4.5-8-4.5z" stroke="#333" stroke-width="1.3" stroke-linejoin="round"/><path d="M1 9.5l8 4.5 8-4.5" stroke="#333" stroke-width="1.3" stroke-linejoin="round"/></svg>
<svg style="position:absolute;left:1248px;top:831px;overflow:visible;" width="6" height="4" viewBox="0 0 6 4" fill="none"><path d="M0 0h6L3 3.5z" fill="#777"/></svg>
<svg style="position:absolute;left:1272px;top:826px;overflow:visible;" width="14" height="15" viewBox="0 0 14 15" fill="none"><path d="M0.7 4V0.7h3.5M10 0.7h3.3V4M13.3 11v3.3H10M4 14.3H0.7V11" stroke="#333" stroke-width="1.3"/><rect x="4.5" y="4.5" width="5" height="6" stroke="#333" stroke-width="1.3"/></svg>
<div class="dk" style="position:absolute;left:1295px;top:825px;font-size:13px;line-height:17px;color:#222;white-space:nowrap;text-align:left;">專注</div>
<svg style="position:absolute;left:1333px;top:825px;overflow:visible;" width="17" height="17" viewBox="0 0 17 17" fill="none"><circle cx="8.5" cy="8.5" r="7.7" stroke="#333" stroke-width="1.3"/><path d="M6.5 5v7l5.5-3.5z" stroke="#333" stroke-width="1.3" stroke-linejoin="round"/></svg>
<svg style="position:absolute;left:1372px;top:832px;overflow:visible;" width="12" height="2" viewBox="0 0 12 2" fill="none"><path d="M0 1h11" stroke="#333" stroke-width="1.3"/></svg>
<div style="position:absolute;left:1394px;top:832px;width:96px;height:2px;background:#e6e6ea;border-radius:1px;"></div>
<div style="position:absolute;left:1394px;top:831px;width:20px;height:4px;background:#333;border-radius:2px;"></div>
<div style="position:absolute;left:1408px;top:826px;width:14px;height:14px;border-radius:50%;box-sizing:border-box;border:2.2px solid #333;background:#fff"></div>
<svg style="position:absolute;left:1500px;top:827px;overflow:visible;" width="12" height="12" viewBox="0 0 12 12" fill="none"><path d="M6 0v12M0 6h12" stroke="#333" stroke-width="1.3"/></svg>
<div class="dk" style="position:absolute;left:1534px;top:825px;font-size:13px;line-height:17px;color:#222;white-space:nowrap;text-align:left;">81%</div>
<svg style="position:absolute;left:1570px;top:830px;overflow:visible;" width="6" height="4" viewBox="0 0 6 4" fill="none"><path d="M0 0h6L3 3.5z" fill="#888"/></svg>
<svg style="position:absolute;left:1602px;top:826px;overflow:visible;" width="17" height="15" viewBox="0 0 17 15" fill="none"><path d="M1 2.5l5-2 5 2 5-2v12l-5 2-5-2-5 2z M6 0.5v12M11 2.5v12" stroke="#333" stroke-width="1.3" stroke-linejoin="round"/></svg>
<svg style="position:absolute;left:1635px;top:826px;overflow:visible;" width="15" height="15" viewBox="0 0 15 15" fill="none"><path d="M0.7 4V0.7h4M10 0.7h4.3V4M14.3 11v3.3H10M4.7 14.3H0.7V11" stroke="#333" stroke-width="1.3"/><rect x="4" y="5" width="7" height="5" stroke="#333" stroke-width="1.3"/></svg>
<div style="position:absolute;left:168px;top:138px;width:152px;height:132px;background:#fff;border-radius:9px;box-shadow:0 3px 14px rgba(0,0,0,0.10);"></div>
<div style="position:absolute;left:176px;top:144px;width:136px;height:40px;background:#f1f3f8;border-radius:8px;"></div>
<svg style="position:absolute;left:191px;top:154px;overflow:visible;" width="22" height="19" viewBox="0 0 22 19" fill="none"><path d="M0 2.5a2 2 0 0 1 2-2h6l2.5 3H19a2 2 0 0 1 2 2V16a2 2 0 0 1-2 2H2a2 2 0 0 1-2-2z" fill="#fbbf24"/><path d="M1.5 6.5h18a1.5 1.5 0 0 1 1.5 1.5V16a2 2 0 0 1-2 2H2a2 2 0 0 1-2-2V8a1.5 1.5 0 0 1 1.5-1.5z" fill="#ffd666"/></svg>
<div class="dk" style="position:absolute;left:226px;top:156px;font-size:13px;line-height:17px;color:#222;white-space:nowrap;text-align:left;">本機圖片</div>
<svg style="position:absolute;left:191px;top:193px;overflow:visible;" width="22" height="22" viewBox="0 0 22 22" fill="none"><rect width="22" height="22" rx="5" fill="#4bb543"/><text x="11" y="14.5" font-size="12" font-family="Liberation Sans" fill="#fff" text-anchor="middle">px</text></svg>
<div class="dk" style="position:absolute;left:226px;top:196px;font-size:13px;line-height:17px;color:#222;white-space:nowrap;text-align:left;letter-spacing:-0.2px;">Pixabay 圖片</div>
<svg style="position:absolute;left:191px;top:233px;overflow:visible;" width="22" height="22" viewBox="0 0 22 22" fill="none"><defs><linearGradient id="aig" x1="0" y1="1" x2="1" y2="0"><stop offset="0" stop-color="#e040fb"/><stop offset=".5" stop-color="#40e0d0"/><stop offset="1" stop-color="#4080ff"/></linearGradient></defs><rect width="22" height="22" rx="5" fill="#15163a"/><path d="M5 18L11 4l6 14" stroke="url(#aig)" stroke-width="2.4" stroke-linejoin="round"/><path d="M3.5 8l13 8" stroke="#fff" stroke-width="2"/></svg>
<div class="dk" style="position:absolute;left:226px;top:236px;font-size:13px;line-height:17px;color:#222;white-space:nowrap;text-align:left;">AI 創作的影像</div>
<div style="position:absolute;left:0px;top:0px;width:1px;height:848px;background:#cdced1;"></div>
<div style="position:absolute;left:1669px;top:0px;width:1px;height:848px;background:#cfd0d3;"></div>
</div></body></html>
